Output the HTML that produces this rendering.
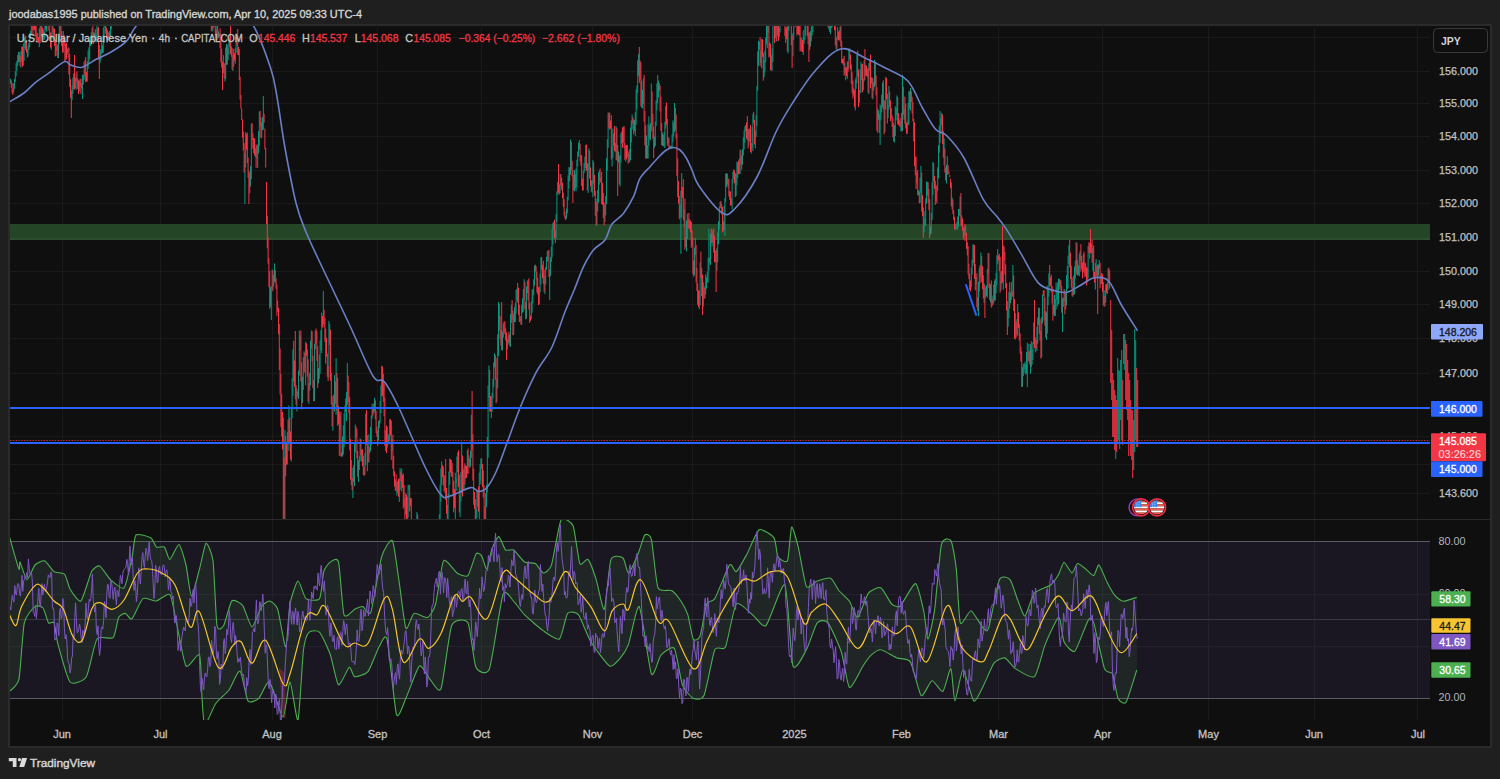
<!DOCTYPE html><html><head><meta charset="utf-8"><style>html,body{margin:0;padding:0;background:#1f1f1f;width:1500px;height:779px;overflow:hidden}svg{display:block}text{font-family:"Liberation Sans", sans-serif}</style></head><body>
<svg width="1500" height="779" viewBox="0 0 1500 779">
<defs><clipPath id="cm"><rect x="10" y="26" width="1420" height="493"/></clipPath><clipPath id="cr"><rect x="10" y="520" width="1420" height="200"/></clipPath></defs>
<rect x="8" y="24" width="1484" height="724" fill="#2a2a2a"/>
<rect x="10" y="26" width="1480" height="720" fill="#0f0f0f"/>
<line x1="62.5" y1="25" x2="62.5" y2="720" stroke="#1a1a1a" stroke-width="1"/>
<line x1="160.5" y1="25" x2="160.5" y2="720" stroke="#1a1a1a" stroke-width="1"/>
<line x1="272.5" y1="25" x2="272.5" y2="720" stroke="#1a1a1a" stroke-width="1"/>
<line x1="377.5" y1="25" x2="377.5" y2="720" stroke="#1a1a1a" stroke-width="1"/>
<line x1="481.5" y1="25" x2="481.5" y2="720" stroke="#1a1a1a" stroke-width="1"/>
<line x1="592.5" y1="25" x2="592.5" y2="720" stroke="#1a1a1a" stroke-width="1"/>
<line x1="692.5" y1="25" x2="692.5" y2="720" stroke="#1a1a1a" stroke-width="1"/>
<line x1="794.5" y1="25" x2="794.5" y2="720" stroke="#1a1a1a" stroke-width="1"/>
<line x1="901.5" y1="25" x2="901.5" y2="720" stroke="#1a1a1a" stroke-width="1"/>
<line x1="998.5" y1="25" x2="998.5" y2="720" stroke="#1a1a1a" stroke-width="1"/>
<line x1="1102.5" y1="25" x2="1102.5" y2="720" stroke="#1a1a1a" stroke-width="1"/>
<line x1="1208.5" y1="25" x2="1208.5" y2="720" stroke="#1a1a1a" stroke-width="1"/>
<line x1="1314.5" y1="25" x2="1314.5" y2="720" stroke="#1a1a1a" stroke-width="1"/>
<line x1="1417.5" y1="25" x2="1417.5" y2="720" stroke="#1a1a1a" stroke-width="1"/>
<line x1="10" y1="594.5" x2="1430" y2="594.5" stroke="#1a1a1a" stroke-width="1"/>
<line x1="10" y1="646.5" x2="1430" y2="646.5" stroke="#1a1a1a" stroke-width="1"/>
<line x1="10" y1="37.5" x2="1430" y2="37.5" stroke="#1a1a1a" stroke-width="1"/>
<line x1="10" y1="71.5" x2="1430" y2="71.5" stroke="#1a1a1a" stroke-width="1"/>
<line x1="10" y1="103.5" x2="1430" y2="103.5" stroke="#1a1a1a" stroke-width="1"/>
<line x1="10" y1="136.5" x2="1430" y2="136.5" stroke="#1a1a1a" stroke-width="1"/>
<line x1="10" y1="170.5" x2="1430" y2="170.5" stroke="#1a1a1a" stroke-width="1"/>
<line x1="10" y1="203.5" x2="1430" y2="203.5" stroke="#1a1a1a" stroke-width="1"/>
<line x1="10" y1="237.5" x2="1430" y2="237.5" stroke="#1a1a1a" stroke-width="1"/>
<line x1="10" y1="271.5" x2="1430" y2="271.5" stroke="#1a1a1a" stroke-width="1"/>
<line x1="10" y1="304.5" x2="1430" y2="304.5" stroke="#1a1a1a" stroke-width="1"/>
<line x1="10" y1="338.5" x2="1430" y2="338.5" stroke="#1a1a1a" stroke-width="1"/>
<line x1="10" y1="373.5" x2="1430" y2="373.5" stroke="#1a1a1a" stroke-width="1"/>
<line x1="10" y1="408.5" x2="1430" y2="408.5" stroke="#1a1a1a" stroke-width="1"/>
<line x1="10" y1="436.5" x2="1430" y2="436.5" stroke="#1a1a1a" stroke-width="1"/>
<line x1="10" y1="464.5" x2="1430" y2="464.5" stroke="#1a1a1a" stroke-width="1"/>
<line x1="10" y1="493.5" x2="1430" y2="493.5" stroke="#1a1a1a" stroke-width="1"/>
<rect x="10" y="224" width="1420" height="16" fill="#254626"/>
<rect x="10" y="238" width="1420" height="2" fill="#2b4f2c"/>
<line x1="10" y1="519.5" x2="1490" y2="519.5" stroke="#2a2a2a" stroke-width="1"/>
<g clip-path="url(#cm)">
<path d="M10.5 78.7V83.6M13.7 83.3V92.5M14.5 79.2V88.8M15.3 71.3V82.0M16.1 63.3V76.4M16.9 61.0V70.9M17.7 55.0V66.0M18.5 51.8V62.3M20.9 51.0V67.6M21.7 46.5V61.9M23.3 43.9V65.6M24.1 38.1V60.8M24.9 36.7V48.0M28.1 45.3V56.5M28.9 42.8V49.5M29.7 33.2V47.3M30.5 30.9V38.7M31.3 23.1V35.5M33.7 22.3V30.2M39.3 28.3V47.2M40.9 10.0V40.8M44.1 32.0V40.0M44.9 23.1V38.0M46.5 16.8V31.5M47.3 11.3V24.2M48.9 16.0V26.1M51.3 32.7V49.7M52.1 15.3V39.2M58.5 35.7V58.1M59.3 20.6V43.9M60.1 20.1V30.7M63.3 31.1V52.7M65.7 44.0V60.3M67.3 48.8V54.9M68.1 47.9V52.5M72.1 85.6V100.1M72.9 77.7V93.7M73.7 73.5V89.4M75.3 77.7V88.1M76.1 73.7V89.9M79.3 80.4V91.0M82.5 74.7V99.0M83.3 74.9V84.5M84.1 61.9V79.9M87.3 61.3V81.4M88.1 50.5V69.0M88.9 47.4V63.5M89.7 39.9V59.1M90.5 36.2V46.1M91.3 32.3V44.0M92.1 28.0V41.5M93.7 32.1V43.9M94.5 33.1V38.8M96.1 34.3V42.6M96.9 21.9V39.4M100.1 49.7V63.0M100.9 49.2V60.1M101.7 42.5V54.1M102.5 45.4V53.0M103.3 27.7V52.6M104.1 17.5V42.8M104.9 21.5V27.3M108.1 32.0V40.0M109.7 31.1V36.6M110.5 25.5V35.9M111.3 12.6V29.4M112.1 9.8V23.4M114.5 12.8V17.1M115.3 2.5V16.6M118.5 16.1V19.8M120.1 -3.4V16.4M120.9 -6.7V4.2M124.9 -1.0V10.0M125.7 -14.3V3.4M126.5 -12.1V-1.6M127.3 -11.9V-5.3M128.1 -17.1V-4.3M128.9 -18.9V-8.8M132.1 -8.4V7.8M133.7 -4.0V5.6M134.5 -18.9V-0.1M138.5 -1.2V5.9M139.3 -7.7V5.4M140.9 -23.4V0.3M141.7 -30.0V-14.5M142.5 -32.5V-22.9M143.3 -33.3V-28.4M146.5 -20.3V6.8M148.1 -15.3V-8.7M148.9 -21.2V-9.5M149.7 -22.6V-13.7M151.3 -40.0V-15.3M155.3 -24.3V2.5M156.9 -24.5V-13.6M158.5 -29.7V-11.7M159.3 -40.3V-21.2M162.5 -29.9V1.8M163.3 -31.1V-18.4M164.1 -40.5V-23.9M165.7 -40.5V-33.2M169.7 -18.8V2.6M170.5 -40.5V-12.4M172.9 -19.8V-7.3M173.7 -25.0V-14.0M175.3 -27.9V-17.8M176.1 -38.9V-20.0M176.9 -40.5V-30.1M180.9 -7.0V0.8M181.7 -12.9V0.1M182.5 -17.8V-6.3M183.3 -21.4V-7.7M184.1 -29.0V-4.3M186.5 6.6V9.1M187.3 3.7V9.6M188.1 -13.6V7.5M188.9 -17.0V-5.0M190.5 -12.9V-2.2M191.3 -25.1V-5.9M192.9 -9.5V-3.9M194.5 -4.9V11.6M195.3 -6.3V3.5M196.1 -18.7V-3.1M201.7 13.2V18.2M202.5 6.4V18.7M203.3 -3.2V17.3M205.7 10.2V20.9M206.5 3.7V20.6M207.3 1.2V9.5M208.9 4.9V12.1M212.9 22.7V31.5M213.7 18.7V27.4M216.9 22.7V38.2M218.5 31.3V37.7M223.3 55.2V73.0M224.9 63.5V81.5M225.7 47.6V79.2M226.5 44.0V64.9M228.1 47.9V60.2M228.9 39.5V54.9M229.7 36.6V47.4M232.9 55.0V71.0M235.3 47.8V63.7M236.1 37.2V52.9M244.9 153.2V204.0M245.7 132.1V167.4M250.5 166.1V186.5M251.3 123.6V179.3M255.3 148.2V157.3M256.9 145.7V158.6M257.7 144.4V168.0M258.5 131.2V153.5M259.3 111.4V145.8M261.7 122.2V138.0M262.5 117.2V130.2M263.3 96.0V129.8M270.5 286.7V307.1M271.3 286.6V320.0M272.1 269.5V289.3M273.7 275.0V286.6M274.5 263.4V281.7M284.9 429.8V520.0M287.3 432.2V464.4M288.9 405.4V450.9M291.3 408.1V461.5M292.1 378.2V418.6M292.9 349.4V395.8M296.9 388.4V411.5M297.7 391.5V396.8M298.5 370.7V399.0M299.3 330.5V375.6M300.1 335.2V350.6M302.5 376.9V402.9M303.3 357.3V389.9M304.1 351.4V371.2M305.7 341.8V385.2M308.9 383.2V403.8M309.7 372.7V390.7M310.5 340.6V385.4M311.3 330.5V348.6M314.5 343.7V401.0M315.3 330.5V349.4M318.5 368.1V383.4M319.3 354.6V378.8M320.1 340.4V373.7M320.9 330.3V350.3M321.7 312.6V353.0M323.3 291.0V324.0M328.9 320.8V377.9M329.7 323.9V344.9M332.9 402.3V430.9M333.7 394.7V409.7M334.5 375.1V411.5M336.1 358.1V414.6M340.1 415.4V430.1M342.5 436.3V456.5M343.3 425.5V454.5M344.1 413.6V447.2M344.9 405.6V443.0M345.7 398.4V412.3M346.5 391.8V421.1M347.3 363.0V404.9M352.9 467.9V498.0M354.5 443.1V486.3M355.3 424.6V452.5M358.5 460.1V482.0M359.3 456.4V470.0M360.1 438.4V461.3M364.9 453.2V475.0M365.7 413.5V465.2M368.9 434.3V462.7M369.7 447.2V453.4M370.5 427.0V451.3M371.3 415.5V445.1M372.1 403.8V418.7M373.7 403.3V413.6M374.5 397.8V411.5M378.5 421.1V440.5M379.3 419.8V428.0M380.1 400.9V423.3M380.9 385.5V413.2M381.7 365.7V396.6M385.7 430.1V451.1M387.3 426.8V447.5M388.1 435.2V443.1M388.9 434.2V444.7M389.7 419.2V440.6M392.1 438.8V451.0M396.9 481.7V495.8M399.3 478.6V502.0M400.1 468.1V490.1M401.7 468.7V491.4M405.7 492.8V514.6M407.3 496.8V529.0M408.1 485.0V517.8M408.9 484.7V489.8M414.5 534.4V547.5M415.3 525.2V545.3M416.9 511.9V537.7M420.9 529.9V545.4M424.1 550.5V573.2M424.9 546.1V580.0M425.7 540.1V555.3M426.5 535.3V546.6M428.9 554.1V562.7M429.7 528.2V567.0M430.5 525.3V546.4M431.3 526.6V533.1M432.1 527.2V531.2M432.9 522.1V538.0M433.7 521.3V529.7M436.9 534.1V544.7M438.5 542.1V550.5M439.3 514.3V542.5M440.1 484.6V522.6M440.9 468.4V501.8M441.7 461.4V485.0M448.1 493.7V522.3M448.9 471.7V498.6M449.7 458.5V484.8M455.3 472.7V530.0M456.1 478.2V483.3M456.9 456.6V491.0M457.7 452.5V472.1M460.1 495.5V517.1M460.9 472.1V501.5M461.7 441.7V493.7M463.3 469.4V490.3M464.1 466.2V489.9M465.7 465.2V478.5M467.3 450.5V473.9M468.9 455.4V465.9M469.7 458.3V468.0M470.5 450.5V466.7M471.3 414.9V458.1M476.1 508.8V524.2M476.9 489.9V517.8M477.7 491.0V506.5M479.3 472.5V530.0M480.1 464.0V480.6M480.9 458.5V484.5M485.7 493.2V521.8M486.5 484.7V507.3M487.3 436.9V492.6M488.1 385.5V457.9M488.9 365.5V398.1M491.3 396.4V418.0M492.1 392.8V411.5M492.9 378.9V398.3M493.7 362.3V387.3M494.5 353.3V367.5M496.9 378.8V401.7M497.7 334.2V388.3M498.5 302.0V355.8M499.3 303.9V330.6M502.5 331.6V350.5M503.3 323.6V337.5M507.3 339.1V349.4M508.1 335.4V344.4M510.5 314.3V346.9M511.3 304.7V323.2M513.7 313.5V334.9M514.5 307.3V322.3M515.3 302.8V322.2M516.1 289.9V313.7M516.9 288.8V300.3M520.1 316.4V321.3M521.7 304.9V325.0M522.5 298.3V312.7M523.3 288.9V311.9M524.1 279.2V299.8M526.5 286.5V318.6M527.3 280.8V293.2M531.3 301.2V319.0M532.1 289.2V312.7M532.9 290.1V303.3M533.7 279.3V295.0M534.5 265.5V285.7M539.3 287.1V304.2M540.1 273.7V292.7M540.9 257.3V284.5M544.9 275.9V294.0M545.7 267.0V284.5M546.5 256.8V269.9M547.3 251.1V261.7M548.1 250.5V260.6M549.7 269.6V300.0M550.5 257.4V276.0M551.3 246.6V262.1M552.1 229.3V257.5M552.9 223.1V244.8M553.7 221.6V230.0M556.1 214.2V238.0M556.9 191.3V222.3M557.7 181.8V194.8M560.1 174.0V193.0M566.5 208.6V218.5M567.3 196.6V213.3M568.1 175.4V200.4M568.9 166.9V188.3M570.5 139.5V174.8M573.7 174.9V190.1M574.5 170.1V191.3M576.1 168.4V191.1M576.9 159.7V187.1M577.7 151.5V166.3M578.5 142.7V156.8M579.3 140.0V150.0M583.3 170.6V190.5M584.1 162.9V173.0M584.9 156.7V171.1M585.7 144.8V167.8M588.1 162.8V193.1M588.9 148.5V170.3M592.1 181.3V192.8M592.9 160.0V197.1M596.9 198.8V225.5M597.7 189.9V211.5M598.5 172.4V202.4M599.3 170.5V184.6M604.9 204.9V222.2M605.7 195.9V215.5M606.5 158.2V204.2M607.3 139.3V170.7M608.1 112.5V148.0M612.1 146.9V166.6M612.9 128.4V158.0M616.1 126.1V160.3M618.5 151.4V162.5M620.1 154.6V186.4M620.9 133.5V162.6M621.7 131.3V143.4M623.3 126.6V142.9M625.7 145.8V161.6M628.9 154.3V162.2M629.7 149.1V162.5M630.5 127.7V160.2M631.3 120.4V142.6M632.1 114.5V129.5M634.5 120.0V131.0M635.3 112.2V136.1M636.1 89.5V124.8M636.9 85.6V109.5M637.7 60.3V92.8M638.5 54.1V75.9M641.7 80.7V107.9M642.5 89.8V108.3M643.3 78.3V104.0M646.5 135.5V158.5M648.1 124.1V158.5M648.9 116.3V145.3M650.5 123.2V140.0M651.3 83.5V131.5M654.5 136.6V147.8M655.3 121.7V145.9M656.1 100.2V126.0M656.9 83.4V110.1M657.7 75.0V103.4M658.5 80.7V97.4M662.5 133.1V145.8M664.1 132.0V146.9M664.9 121.8V148.0M665.7 105.9V128.6M668.1 137.1V143.2M670.5 145.8V148.5M671.3 145.8V148.5M672.1 134.5V148.5M672.9 120.4V141.9M673.7 122.6V136.5M674.5 103.0V132.1M680.1 204.3V217.3M680.9 190.6V254.0M681.7 173.1V217.8M684.1 209.0V227.3M686.5 220.4V251.5M687.3 213.5V238.7M689.7 219.4V229.0M694.5 247.6V275.3M695.3 237.9V254.9M699.3 290.7V309.3M700.1 262.4V305.3M703.3 282.3V306.5M704.1 286.0V298.7M705.7 274.4V294.5M706.5 277.6V288.6M707.3 271.7V282.5M708.1 257.9V282.5M708.9 229.0V270.8M710.5 233.7V265.0M712.1 232.7V246.3M715.3 250.5V262.4M716.9 248.3V270.9M717.7 232.5V262.0M718.5 221.2V244.1M719.3 206.5V229.6M720.1 201.8V208.4M724.1 205.9V229.4M724.9 198.2V236.0M725.7 173.5V202.2M726.5 173.5V186.9M732.1 179.2V209.4M732.9 171.9V183.6M733.7 169.4V179.1M736.1 174.1V195.9M736.9 161.7V185.1M737.7 162.2V178.1M739.3 158.4V173.9M740.1 149.6V174.2M742.5 149.1V164.8M743.3 137.2V155.5M744.1 130.3V149.3M744.9 126.3V142.8M745.7 125.0V131.2M748.9 128.9V145.5M749.7 128.6V141.2M751.3 143.2V153.5M752.1 127.3V147.6M752.9 114.2V151.1M755.3 130.7V148.4M756.1 115.3V137.0M756.9 86.2V125.8M757.7 51.5V90.7M758.5 40.8V65.7M759.3 41.7V49.7M760.9 50.6V63.2M761.7 38.8V68.3M764.1 60.1V77.3M764.9 50.6V72.3M765.7 37.4V62.1M766.5 10.0V44.4M767.3 23.7V48.2M768.1 17.4V32.7M769.7 42.2V56.6M771.3 55.2V70.5M772.1 48.3V71.0M772.9 13.3V62.0M776.1 26.0V41.8M777.7 24.9V35.7M779.3 27.8V36.7M780.1 11.5V32.6M780.9 6.4V20.0M781.7 -10.0V12.1M785.7 27.2V43.0M788.1 19.6V53.3M788.9 5.2V30.8M792.9 32.9V56.3M793.7 13.8V39.8M794.5 12.2V17.6M797.7 22.5V33.9M799.3 26.1V35.5M801.7 37.4V51.7M803.3 30.2V54.9M804.1 36.5V43.8M804.9 24.9V39.8M805.7 17.5V35.6M806.5 11.4V22.6M810.5 31.1V46.6M811.3 26.3V41.2M812.1 17.3V35.7M812.9 10.0V32.2M813.7 -11.0V18.4M815.3 -13.9V0.9M817.7 -0.3V11.4M818.5 -2.8V16.8M820.1 0.4V11.6M820.9 -6.5V2.8M821.7 -17.4V3.1M827.3 17.2V24.6M828.9 19.5V29.7M829.7 20.8V31.9M830.5 22.3V34.1M831.3 17.4V28.4M832.1 8.1V27.3M836.9 36.5V51.0M837.7 27.1V39.5M840.1 26.5V41.8M843.3 58.4V65.1M844.9 62.7V73.5M845.7 67.1V80.3M847.3 61.4V79.0M848.9 48.5V68.6M855.3 79.3V110.3M856.1 77.2V88.9M856.9 54.7V83.4M859.3 90.1V103.1M860.1 69.3V93.4M860.9 61.6V92.7M861.7 64.1V80.0M863.3 78.9V90.0M864.1 60.7V81.3M865.7 64.9V75.5M868.9 63.2V94.1M869.7 58.9V70.4M872.9 78.3V99.3M873.7 82.0V90.8M874.5 59.9V87.0M877.7 108.5V132.8M878.5 110.4V119.8M880.1 104.4V145.0M880.9 105.8V120.2M881.7 94.7V112.3M882.5 82.7V107.4M884.9 100.2V132.2M885.7 76.8V109.6M888.1 105.3V118.1M888.9 86.0V109.6M894.5 125.3V142.5M895.3 106.3V135.9M896.1 108.0V120.4M896.9 95.4V115.0M899.3 120.3V125.5M900.9 120.9V131.5M902.5 75.0V131.1M904.1 109.2V119.8M907.3 121.4V134.1M908.1 102.9V125.3M908.9 91.2V124.8M910.5 88.1V110.5M918.5 190.2V195.4M920.1 177.8V203.0M920.9 165.8V192.5M924.1 210.9V232.5M924.9 218.7V225.6M925.7 198.3V226.0M926.5 181.5V203.8M927.3 181.9V195.5M930.5 226.3V234.8M931.3 212.9V233.3M932.1 182.2V220.1M932.9 161.8V195.0M937.7 167.3V190.9M938.5 145.2V178.4M939.3 125.5V152.7M940.1 111.0V142.8M940.9 117.9V134.1M941.7 112.9V125.1M944.1 138.3V165.2M946.5 164.9V183.4M947.3 156.3V175.0M952.1 197.5V209.3M955.3 223.5V229.5M956.1 227.9V229.5M956.9 222.0V229.5M957.7 216.5V229.5M958.5 208.9V226.9M959.3 208.9V215.6M960.1 196.4V216.2M964.1 226.3V236.4M965.7 226.1V235.4M971.3 267.5V287.4M972.1 259.9V274.5M972.9 244.5V266.4M976.1 276.8V284.1M978.5 282.0V316.2M979.3 267.5V291.4M980.9 252.5V276.5M984.1 283.3V302.9M985.7 287.3V297.5M986.5 285.4V295.8M987.3 269.0V297.7M988.1 253.1V273.6M990.5 284.3V302.3M992.9 295.7V304.8M993.7 284.6V303.5M994.5 280.7V300.3M996.1 272.7V293.4M996.9 255.3V285.2M997.7 249.1V264.2M1000.9 272.5V290.5M1001.7 270.7V283.8M1003.3 245.3V289.7M1008.1 308.0V326.8M1008.9 291.8V318.3M1010.5 292.8V303.3M1011.3 281.9V300.0M1012.9 265.0V296.6M1015.3 312.9V339.5M1016.9 319.2V334.1M1017.7 304.1V336.0M1022.5 367.3V386.7M1023.3 363.7V376.1M1024.1 363.9V373.1M1024.9 361.8V369.2M1025.7 363.8V374.8M1026.5 352.1V373.2M1027.3 342.7V387.0M1028.9 343.8V360.8M1030.5 344.3V373.7M1032.1 349.8V364.7M1032.9 342.1V360.0M1033.7 322.5V344.5M1035.3 337.3V352.5M1036.9 326.7V351.0M1037.7 317.4V343.8M1038.5 307.8V325.0M1041.7 316.9V357.4M1042.5 294.5V323.4M1046.5 312.3V339.9M1047.3 285.6V333.7M1048.1 288.3V305.3M1048.9 273.3V296.6M1054.5 295.0V316.1M1055.3 299.0V316.0M1056.1 282.4V309.4M1056.9 287.4V299.5M1057.7 282.4V306.3M1058.5 278.6V303.9M1059.3 278.8V289.3M1062.5 298.2V332.0M1063.3 297.5V306.9M1064.1 288.9V301.4M1066.5 275.3V305.4M1067.3 266.3V289.1M1068.1 255.6V288.4M1068.9 245.2V263.7M1072.9 287.3V296.9M1073.7 275.5V295.0M1074.5 266.5V294.2M1075.3 260.6V278.5M1076.1 242.3V272.9M1077.7 259.9V275.4M1078.5 265.4V275.3M1079.3 253.8V276.2M1080.1 251.1V260.2M1083.3 254.0V271.9M1087.3 268.1V282.5M1088.1 246.1V278.4M1089.7 243.0V258.7M1092.9 248.1V270.8M1095.3 263.1V289.6M1096.1 259.1V276.4M1098.5 264.5V275.6M1099.3 260.1V268.9M1100.9 275.7V284.0M1104.9 290.0V306.5M1105.7 284.3V302.7M1107.3 282.1V294.0M1108.1 268.4V290.0M1115.7 395.0V459.0M1117.7 358.0V442.0M1118.7 370.0V440.0M1119.7 371.0V449.0M1120.7 360.0V420.0M1121.7 350.0V440.0M1124.7 334.0V370.0M1131.7 410.0V460.0M1133.7 420.0V470.0M1134.7 329.0V452.0M1135.7 340.0V440.0" stroke="#089981" stroke-width="1" fill="none"/>
<path d="M11.3 80.4V87.9M12.1 82.9V93.3M12.9 88.5V95.0M19.3 52.3V61.9M20.1 56.1V66.0M22.5 46.9V66.8M25.7 35.7V50.2M26.5 40.3V52.7M27.3 48.9V57.6M32.1 22.8V30.5M32.9 24.6V35.5M34.5 21.3V30.1M35.3 24.9V36.5M36.1 24.5V39.4M36.9 33.4V40.5M37.7 32.8V42.4M38.5 37.0V42.9M40.1 26.3V43.1M41.7 22.4V36.3M42.5 27.6V33.4M43.3 29.4V37.6M45.7 19.5V29.5M48.1 10.0V30.8M49.7 17.4V38.5M50.5 32.5V47.7M52.9 15.5V32.6M53.7 28.3V37.5M54.5 28.6V45.8M55.3 39.5V56.4M56.1 42.6V55.9M56.9 46.1V50.8M57.7 44.4V57.9M60.9 17.2V36.8M61.7 31.0V46.0M62.5 37.3V52.3M64.1 34.9V46.2M64.9 39.3V62.0M66.5 43.0V59.2M68.9 47.6V74.6M69.7 53.9V86.8M70.5 79.2V97.8M71.3 90.5V118.0M74.5 55.0V89.4M76.9 71.2V81.6M77.7 78.2V89.0M78.5 80.7V94.2M80.1 78.8V86.6M80.9 78.8V94.0M81.7 83.2V88.6M84.9 60.2V76.1M85.7 57.1V82.2M86.5 72.1V81.8M92.9 26.0V43.0M95.3 29.1V40.6M97.7 28.1V35.5M98.5 26.8V59.5M99.3 45.1V79.0M105.7 17.8V33.8M106.5 27.6V38.3M107.3 29.9V39.9M108.9 33.1V38.1M112.9 8.5V13.0M113.7 10.1V17.3M116.1 3.4V15.9M116.9 10.8V13.7M117.7 11.3V21.5M119.3 15.7V18.1M121.7 -7.1V0.2M122.5 -7.8V2.0M123.3 -7.8V10.5M124.1 1.6V10.6M129.7 -14.0V-2.5M130.5 -8.1V0.8M131.3 -5.8V11.9M132.9 -2.7V6.0M135.3 -17.7V-7.5M136.1 -13.5V-2.6M136.9 -6.4V1.7M137.7 -6.0V8.5M140.1 -6.7V-1.7M144.1 -34.1V-28.6M144.9 -34.1V-11.6M145.7 -19.9V7.1M147.3 -15.5V1.4M150.5 -26.5V-14.2M152.1 -28.3V-9.1M152.9 -14.6V-5.1M153.7 -14.4V-5.2M154.5 -8.6V5.5M156.1 -22.9V-13.2M157.7 -26.9V-9.8M160.1 -39.2V-27.1M160.9 -33.6V-10.7M161.7 -15.5V-0.3M164.9 -40.5V-29.9M166.5 -40.5V-26.8M167.3 -32.2V-14.2M168.1 -25.4V-7.4M168.9 -13.9V2.4M171.3 -40.5V-18.0M172.1 -27.3V-0.6M174.5 -24.9V-14.6M177.7 -38.5V-15.7M178.5 -27.3V-5.6M179.3 -40.0V-3.8M180.1 -9.9V5.5M184.9 -26.7V-2.0M185.7 -7.2V8.6M189.7 -12.0V2.1M192.1 -23.6V-2.8M193.7 -7.8V6.4M196.9 -16.3V-10.6M197.7 -16.3V-1.5M198.5 -6.7V2.7M199.3 -1.2V3.2M200.1 -1.8V8.2M200.9 1.2V17.7M204.1 -3.7V16.0M204.9 8.2V20.1M208.1 3.1V15.5M209.7 6.3V15.2M210.5 10.4V23.9M211.3 20.1V31.3M212.1 24.8V29.3M214.5 19.4V26.4M215.3 18.8V36.4M216.1 29.4V40.4M217.7 23.9V39.5M219.3 33.1V36.7M220.1 28.3V48.3M220.9 33.9V62.5M221.7 48.6V67.6M222.5 61.8V90.0M224.1 63.2V78.2M227.3 44.6V64.7M230.5 25.0V54.0M231.3 46.2V56.7M232.1 48.0V69.5M233.7 48.9V66.5M234.5 53.0V60.6M236.9 37.8V45.2M237.7 29.0V54.9M238.5 47.1V55.1M239.3 49.1V80.0M240.1 76.6V99.6M240.9 95.0V108.7M241.7 108.5V120.0M242.5 119.3V137.8M243.3 131.7V150.7M244.1 143.2V172.7M246.5 134.3V149.7M247.3 132.6V163.0M248.1 157.6V177.9M248.9 170.8V204.0M249.7 172.7V193.4M252.1 123.2V140.5M252.9 133.3V148.8M253.7 138.0V153.1M254.5 138.1V155.3M256.1 144.5V167.8M260.1 110.9V127.3M260.9 117.4V138.1M264.1 113.8V122.6M264.9 128.5V149.3M265.7 148.0V167.6M266.5 182.0V224.4M267.3 216.0V248.3M268.1 237.8V263.9M268.9 258.0V287.2M269.7 271.0V308.9M272.9 270.2V291.1M275.3 270.1V283.5M276.1 278.1V288.9M276.9 284.5V315.9M277.7 300.7V312.0M278.5 307.9V334.3M279.3 323.8V370.0M280.1 348.4V394.5M280.9 373.9V426.9M281.7 394.0V436.3M282.5 412.0V449.5M283.3 417.4V520.0M284.1 457.5V518.5M285.7 436.1V476.3M286.5 444.0V464.8M288.1 419.6V443.3M289.7 417.6V442.6M290.5 431.4V459.5M293.7 340.8V381.6M294.5 360.6V386.7M295.3 331.0V399.4M296.1 385.1V404.8M300.9 330.5V381.5M301.7 362.3V409.5M304.9 352.8V372.9M306.5 343.2V355.8M307.3 349.3V376.7M308.1 359.3V401.5M312.1 331.2V361.4M312.9 355.6V388.1M313.7 380.0V401.4M316.1 328.5V344.2M316.9 331.1V360.9M317.7 346.2V387.9M322.5 315.9V327.4M324.1 309.8V327.5M324.9 317.9V341.7M325.7 328.6V363.6M326.5 337.8V356.7M327.3 353.7V376.8M328.1 366.2V380.9M330.5 329.5V380.6M331.3 372.9V404.3M332.1 396.1V426.5M335.3 381.3V403.7M336.9 373.0V410.1M337.7 378.0V425.9M338.5 405.9V424.2M339.3 411.8V456.0M340.9 411.7V456.5M341.7 452.3V456.5M348.1 375.5V402.2M348.9 382.0V413.3M349.7 397.2V450.4M350.5 439.1V479.4M351.3 459.9V485.3M352.1 478.0V490.1M353.7 465.3V482.0M356.1 426.9V437.5M356.9 429.2V458.3M357.7 450.9V476.8M360.9 439.1V455.4M361.7 449.8V461.7M362.5 449.2V466.2M363.3 455.7V474.8M364.1 466.5V476.0M366.5 410.0V444.9M367.3 435.0V471.3M368.1 446.1V461.9M372.9 408.4V415.8M375.3 400.3V419.5M376.1 410.7V433.0M376.9 426.6V436.7M377.7 430.6V445.8M382.5 366.5V395.8M383.3 373.7V401.8M384.1 383.7V416.2M384.9 397.7V446.0M386.5 425.4V453.1M390.5 419.2V435.3M391.3 420.7V460.1M392.9 434.7V468.8M393.7 455.9V476.2M394.5 471.3V486.5M395.3 479.4V491.0M396.1 474.1V490.3M397.7 481.2V493.2M398.5 478.8V496.8M400.9 471.6V481.0M402.5 474.9V487.9M403.3 473.6V508.6M404.1 485.0V506.7M404.9 498.6V520.0M406.5 494.6V524.2M409.7 485.2V511.5M410.5 498.3V505.9M411.3 498.0V526.6M412.1 521.9V543.3M412.9 522.1V560.0M413.7 535.9V553.9M416.1 525.5V538.2M417.7 514.4V525.0M418.5 519.8V532.9M419.3 523.0V533.2M420.1 526.6V552.1M421.7 535.1V545.6M422.5 540.5V555.3M423.3 546.0V571.4M427.3 536.1V557.9M428.1 536.4V565.9M434.5 520.5V525.1M435.3 519.7V531.1M436.1 520.6V580.0M437.7 533.9V558.5M442.5 465.2V477.1M443.3 466.7V485.4M444.1 476.2V491.1M444.9 475.2V492.6M445.7 459.0V500.1M446.5 488.1V513.7M447.3 504.7V520.5M450.5 459.3V472.6M451.3 459.8V476.7M452.1 463.0V476.9M452.9 471.7V493.5M453.7 480.8V512.3M454.5 489.3V508.1M458.5 450.4V487.1M459.3 474.7V512.5M462.5 455.5V496.6M464.9 463.2V484.5M466.5 466.0V478.0M468.1 448.5V473.7M472.1 391.0V449.8M472.9 434.1V480.5M473.7 468.7V504.8M474.5 492.0V508.8M475.3 499.0V523.1M478.5 486.4V511.6M481.7 458.5V468.6M482.5 464.1V486.8M483.3 470.5V497.5M484.1 485.4V523.5M484.9 506.7V521.6M489.7 369.8V411.5M490.5 396.1V411.8M495.3 355.1V379.8M496.1 358.0V403.3M500.1 315.8V339.1M500.9 330.3V345.7M501.7 302.0V350.2M504.1 321.4V332.3M504.9 321.4V334.2M505.7 328.5V340.4M506.5 332.4V360.0M508.9 331.6V342.3M509.7 334.2V345.8M512.1 300.2V319.5M512.9 310.3V335.3M517.7 283.0V302.6M518.5 287.7V315.0M519.3 304.5V322.0M520.9 316.1V324.6M524.9 281.8V309.4M525.7 302.3V319.4M528.1 280.0V299.9M528.9 278.3V309.5M529.7 303.0V323.0M530.5 315.8V321.0M535.3 264.7V271.5M536.1 266.1V279.6M536.9 271.8V292.4M537.7 278.0V294.5M538.5 287.2V305.1M541.7 257.0V270.0M542.5 264.9V278.2M543.3 260.8V283.8M544.1 269.5V291.9M548.9 249.9V277.0M554.5 219.7V237.9M555.3 230.8V243.1M558.5 164.0V192.9M559.3 184.3V194.7M560.9 174.3V185.3M561.7 177.7V189.9M562.5 182.8V198.2M563.3 192.6V206.8M564.1 199.3V215.7M564.9 211.5V218.5M565.7 215.8V220.1M569.7 167.6V181.3M571.3 141.7V170.4M572.1 160.9V176.2M572.9 170.1V202.9M575.3 174.2V188.2M580.1 143.7V161.3M580.9 154.9V165.8M581.7 155.1V186.0M582.5 178.9V190.5M586.5 144.6V170.6M587.3 163.3V190.5M589.7 150.8V178.6M590.5 167.5V186.3M591.3 180.1V191.6M593.7 162.3V183.5M594.5 174.9V195.9M595.3 190.8V215.9M596.1 201.6V225.5M600.1 168.5V181.4M600.9 177.6V183.0M601.7 171.8V204.1M602.5 183.0V205.0M603.3 193.0V218.0M604.1 202.4V225.4M608.9 112.8V128.0M609.7 112.5V129.7M610.5 120.6V128.7M611.3 115.1V159.6M613.7 133.4V146.2M614.5 126.0V151.0M615.3 143.0V152.0M616.9 128.0V160.3M617.7 145.0V196.0M619.3 155.8V184.3M622.5 127.4V147.8M624.1 126.2V148.1M624.9 142.9V159.8M626.5 145.0V159.2M627.3 144.8V157.0M628.1 151.4V163.6M632.9 117.3V123.6M633.7 119.5V134.2M639.3 47.0V82.8M640.1 60.6V80.2M640.9 62.4V106.3M644.1 74.9V121.8M644.9 111.0V145.4M645.7 125.4V158.5M647.3 144.9V158.5M649.7 125.6V138.4M652.1 91.4V125.5M652.9 113.7V138.7M653.7 126.5V158.0M659.3 83.2V90.5M660.1 85.7V111.3M660.9 96.7V130.9M661.7 122.9V145.1M663.3 134.9V146.0M666.5 102.5V124.7M667.3 118.9V145.7M668.9 137.8V148.5M669.7 145.3V148.5M675.3 107.9V130.4M676.1 114.4V138.6M676.9 133.4V176.1M677.7 158.4V197.0M678.5 181.1V203.5M679.3 195.8V219.4M682.5 187.1V197.8M683.3 179.1V220.3M684.9 198.6V249.7M685.7 237.1V247.3M688.1 218.5V228.7M688.9 213.0V228.0M690.5 220.7V232.2M691.3 222.0V247.9M692.1 230.5V246.0M692.9 237.3V273.9M693.7 260.5V276.7M696.1 244.9V282.4M696.9 268.0V291.1M697.7 283.2V304.9M698.5 290.4V307.1M700.9 251.6V278.3M701.7 267.6V296.2M702.5 274.6V315.0M704.9 288.0V298.5M709.7 257.4V262.8M711.3 228.5V242.9M712.9 229.7V242.8M713.7 228.5V252.5M714.5 235.7V262.3M716.1 250.3V292.0M720.9 200.9V208.0M721.7 204.2V214.3M722.5 207.0V232.3M723.3 221.3V231.3M727.3 173.5V184.5M728.1 179.6V187.9M728.9 178.4V196.4M729.7 190.9V199.9M730.5 191.5V205.6M731.3 198.7V205.6M734.5 170.3V183.3M735.3 173.2V197.0M738.5 160.7V174.3M740.9 150.3V164.4M741.7 155.4V169.7M746.5 122.3V138.4M747.3 116.1V140.4M748.1 128.9V148.5M750.5 124.9V152.1M753.7 111.8V123.2M754.5 120.0V144.4M760.1 37.0V66.3M762.5 39.4V56.9M763.3 52.6V80.6M768.9 19.1V57.4M770.5 43.7V70.3M773.7 17.4V23.9M774.5 19.7V43.0M775.3 25.1V38.0M776.9 22.9V41.0M778.5 19.0V40.8M782.5 -0.2V7.6M783.3 3.4V17.3M784.1 14.5V25.2M784.9 13.7V36.1M786.5 27.5V39.1M787.3 24.8V51.4M789.7 6.7V19.2M790.5 8.2V24.7M791.3 14.0V45.2M792.1 35.7V68.0M795.3 7.5V26.9M796.1 13.5V22.9M796.9 18.1V35.7M798.5 18.3V34.6M800.1 0.0V51.3M800.9 38.3V50.5M802.5 40.0V52.1M807.3 11.1V36.4M808.1 23.6V44.4M808.9 32.1V62.0M809.7 32.7V50.2M814.5 -5.3V1.5M816.1 -20.0V1.8M816.9 -7.4V9.5M819.3 3.0V10.8M822.5 -15.8V-4.7M823.3 -13.1V-0.5M824.1 -10.9V-0.2M824.9 -11.5V2.8M825.7 -5.1V12.7M826.5 3.3V23.2M828.1 14.5V27.6M832.9 10.0V13.7M833.7 11.0V23.2M834.5 12.0V30.3M835.3 23.3V45.3M836.1 38.5V48.9M838.5 31.8V40.4M839.3 30.3V39.9M840.9 26.2V46.8M841.7 40.7V63.1M842.5 59.0V63.5M844.1 55.9V75.6M846.5 67.3V76.1M848.1 61.0V71.6M849.7 48.5V59.5M850.5 54.7V69.6M851.3 64.5V84.1M852.1 72.2V93.0M852.9 80.6V98.4M853.7 88.4V95.4M854.5 90.2V107.2M857.7 50.6V76.6M858.5 69.6V107.2M862.5 63.8V92.2M864.9 49.0V79.8M866.5 65.6V76.0M867.3 69.0V77.0M868.1 67.7V92.7M870.5 54.6V88.3M871.3 77.1V83.4M872.1 77.4V98.1M875.3 62.8V85.4M876.1 75.3V95.4M876.9 87.4V130.8M879.3 114.1V132.7M883.3 80.3V109.4M884.1 100.6V134.4M886.5 77.9V99.2M887.3 93.7V123.5M889.7 91.7V106.7M890.5 100.4V121.2M891.3 108.2V118.7M892.1 115.4V127.0M892.9 117.9V137.3M893.7 123.2V141.4M897.7 97.1V124.1M898.5 113.1V125.3M900.1 117.8V127.3M901.7 112.9V130.6M903.3 86.6V114.6M904.9 96.6V123.8M905.7 103.8V128.4M906.5 122.8V133.6M909.7 90.9V108.5M911.3 91.5V101.9M912.1 96.8V113.5M912.9 102.2V121.2M913.7 118.8V141.3M914.5 122.2V166.1M915.3 156.7V175.2M916.1 156.6V189.0M916.9 172.7V183.5M917.7 169.9V195.2M919.3 191.5V203.4M921.7 172.6V211.6M922.5 195.1V216.2M923.3 207.4V238.0M928.1 182.3V203.0M928.9 189.0V210.0M929.7 199.2V238.0M933.7 163.1V181.7M934.5 175.9V188.7M935.3 180.9V205.0M936.1 185.1V200.8M936.9 187.1V203.5M942.5 114.5V144.1M943.3 131.1V157.6M944.9 148.3V172.5M945.7 167.3V180.5M948.1 165.1V173.8M948.9 171.3V174.3M949.7 175.0V177.2M950.5 178.7V188.2M951.3 182.4V206.3M952.9 199.3V213.9M953.7 210.3V219.9M954.5 216.8V229.5M960.9 193.0V225.5M961.7 215.4V226.4M962.5 218.4V231.0M963.3 228.1V239.3M964.9 223.8V240.8M966.5 232.8V248.9M967.3 242.2V255.5M968.1 246.1V274.5M968.9 263.7V279.1M969.7 273.7V289.9M970.5 280.7V291.6M973.7 244.5V263.0M974.5 245.0V278.8M975.3 264.1V290.3M976.9 273.2V307.3M977.7 297.5V311.0M980.1 264.9V283.3M981.7 256.2V282.3M982.5 266.1V289.2M983.3 275.3V298.4M984.9 285.0V318.0M988.9 253.2V288.2M989.7 283.3V300.1M991.3 280.5V307.7M992.1 299.2V306.2M995.3 279.0V300.8M998.5 255.4V260.4M999.3 253.7V271.1M1000.1 257.0V292.8M1002.5 226.0V282.6M1004.1 246.5V260.2M1004.9 252.0V274.5M1005.7 264.4V288.1M1006.5 283.1V310.5M1007.3 300.9V335.0M1009.7 282.4V308.2M1012.1 291.1V296.7M1013.7 275.3V310.9M1014.5 299.1V338.8M1016.1 322.1V337.8M1018.5 312.4V327.9M1019.3 323.9V340.5M1020.1 333.3V353.7M1020.9 346.4V361.6M1021.7 351.4V387.0M1028.1 351.6V361.5M1029.7 350.9V364.4M1031.3 341.3V367.3M1034.5 300.0V348.0M1036.1 339.7V348.9M1039.3 307.8V333.7M1040.1 319.1V340.7M1040.9 331.0V358.5M1043.3 290.5V296.0M1044.1 290.0V320.7M1044.9 297.8V325.7M1045.7 310.9V337.5M1049.7 265.0V286.7M1050.5 277.3V285.7M1051.3 274.8V292.1M1052.1 286.0V303.8M1052.9 289.0V320.6M1053.7 305.2V314.4M1060.1 280.1V286.2M1060.9 280.4V290.6M1061.7 285.8V312.5M1064.9 290.2V314.4M1065.7 293.6V309.5M1069.7 240.0V267.5M1070.5 252.6V279.0M1071.3 265.7V287.6M1072.1 277.5V296.2M1076.9 242.7V275.0M1080.9 244.2V271.5M1081.7 256.0V268.7M1082.5 262.4V278.3M1084.1 251.7V273.0M1084.9 262.4V277.1M1085.7 263.2V276.1M1086.5 267.1V285.5M1088.9 242.3V253.2M1090.5 229.0V253.1M1091.3 243.7V253.3M1092.1 239.6V262.9M1093.7 245.3V278.2M1094.5 271.9V282.7M1096.9 266.0V276.6M1097.7 264.4V314.0M1100.1 263.0V288.4M1101.7 273.0V284.2M1102.5 273.9V291.8M1103.3 282.0V305.2M1104.1 296.1V306.5M1106.5 284.1V292.8M1108.9 267.8V283.3M1109.7 270.4V288.5M1110.7 300.0V383.0M1111.7 330.0V400.0M1112.7 373.0V437.0M1113.7 380.0V437.0M1114.7 390.0V450.0M1116.7 400.0V452.0M1122.7 380.0V445.0M1123.7 334.0V364.0M1125.7 340.0V400.0M1126.7 344.0V410.0M1127.7 360.0V420.0M1128.7 373.0V456.0M1129.7 380.0V440.0M1130.7 400.0V456.0M1132.7 410.0V478.0M1136.7 368.0V447.0M1137.7 380.0V447.0" stroke="#f23645" stroke-width="1" fill="none"/>
<path d="M9.6,101.8C12.0,100.3 19.7,96.2 24.0,93.0C28.3,89.8 31.3,85.8 35.3,82.6C39.3,79.4 43.2,77.2 48.0,73.7C52.8,70.2 60.4,63.2 64.2,61.7C68.0,60.2 67.7,64.1 70.6,65.0C73.5,65.9 77.5,68.2 81.8,67.3C86.1,66.3 91.2,62.0 96.3,59.3C101.4,56.6 107.2,54.4 112.3,51.3C117.4,48.2 122.6,45.3 126.7,40.9C130.8,36.5 131.6,30.8 137.2,24.8C142.8,18.8 149.5,11.6 160.0,5.0C170.5,-1.6 188.3,-14.2 200.0,-15.0C211.7,-15.8 221.2,-6.7 230.0,0.0C238.8,6.7 246.2,13.7 253.0,25.0C259.8,36.3 266.6,56.0 270.6,68.0C274.6,80.0 274.6,83.7 277.0,97.0C279.4,110.3 281.8,130.3 285.0,148.0C288.2,165.7 292.5,189.0 296.0,203.0C299.5,217.0 301.4,220.8 306.0,232.0C310.6,243.2 316.0,254.0 323.5,270.0C331.0,286.0 342.8,310.3 351.0,328.0C359.2,345.7 367.4,367.0 373.0,376.0C378.6,385.0 380.2,376.7 384.5,382.0C388.8,387.3 392.3,394.0 399.0,408.0C405.7,422.0 417.7,451.6 424.6,466.0C431.6,480.4 436.5,489.6 440.7,494.6C444.9,499.6 445.0,497.2 450.0,496.0C455.0,494.8 465.8,488.4 470.5,487.6C475.2,486.8 475.8,491.3 478.5,491.4C481.2,491.5 483.6,491.2 486.5,488.0C489.4,484.8 492.6,479.5 496.0,472.0C499.4,464.5 503.0,453.7 507.0,443.0C511.0,432.3 515.2,419.7 520.0,408.0C524.8,396.3 530.7,382.9 536.0,372.7C541.3,362.5 547.2,357.2 552.0,347.0C556.8,336.8 561.3,321.2 565.0,311.7C568.7,302.2 571.1,297.5 574.2,290.0C577.3,282.5 580.2,273.5 583.4,266.8C586.6,260.1 589.8,254.5 593.4,250.0C597.0,245.5 601.9,244.3 605.0,240.0C608.1,235.7 608.7,228.7 611.8,224.3C614.9,219.9 619.8,218.0 623.4,213.4C627.0,208.8 630.7,202.5 633.5,196.7C636.3,190.9 637.2,183.4 640.0,178.4C642.8,173.4 647.3,169.8 650.0,166.7C652.7,163.6 653.5,162.6 656.0,160.0C658.5,157.4 662.2,153.1 665.0,151.0C667.8,148.9 670.5,147.7 673.0,147.5C675.5,147.3 677.8,148.3 680.0,150.0C682.2,151.7 684.0,154.2 686.0,157.5C688.0,160.8 689.8,165.2 692.0,170.0C694.2,174.8 694.0,178.9 699.0,186.0C704.0,193.1 715.8,208.8 721.7,212.6C727.6,216.4 728.7,214.9 734.6,209.0C740.5,203.1 750.1,189.8 757.0,177.0C763.9,164.2 770.1,144.3 776.0,132.0C781.9,119.7 785.8,113.5 792.3,103.4C798.8,93.3 806.8,80.4 814.8,71.3C822.8,62.2 832.0,51.1 840.5,49.0C849.0,46.9 858.5,55.3 866.0,58.5C873.5,61.7 878.4,64.2 885.4,68.0C892.4,71.8 901.7,74.3 907.9,81.0C914.1,87.7 917.9,100.0 922.5,108.0C927.1,116.0 931.3,124.4 935.3,129.0C939.3,133.6 941.7,130.7 946.5,135.5C951.3,140.3 957.9,147.3 964.0,158.0C970.1,168.7 978.0,190.1 983.4,199.7C988.8,209.3 992.5,211.0 996.3,215.8C1000.1,220.6 1001.7,222.0 1006.0,228.6C1010.3,235.2 1016.7,246.3 1022.0,255.3C1027.3,264.3 1032.7,276.7 1038.0,282.6C1043.3,288.5 1049.2,289.0 1054.0,290.6C1058.8,292.2 1062.7,293.0 1067.0,292.2C1071.3,291.4 1075.2,288.2 1079.7,285.8C1084.2,283.4 1089.4,278.6 1094.2,277.8C1099.0,277.0 1104.1,276.5 1108.6,281.0C1113.1,285.5 1116.6,296.7 1121.4,305.0C1126.2,313.3 1134.8,326.4 1137.5,330.7" fill="none" stroke="#6b7fc6" stroke-width="1.6"/>
<line x1="965.8" y1="284.2" x2="976.4" y2="315.6" stroke="#2962ff" stroke-width="2"/>
</g>
<rect x="10" y="407" width="1420" height="2" fill="#2962ff"/>
<line x1="10" y1="440.5" x2="1430" y2="440.5" stroke="#f23645" stroke-width="1" stroke-dasharray="1.4 1.4" opacity="0.8"/>
<rect x="10" y="442" width="1420" height="2" fill="#2962ff"/>
<rect x="10" y="542" width="1420" height="156" fill="rgba(126,87,194,0.11)"/>
<line x1="10" y1="541.5" x2="1430" y2="541.5" stroke="#5d5b66" stroke-width="1"/>
<line x1="10" y1="619.5" x2="1430" y2="619.5" stroke="#3a3842" stroke-width="1"/>
<line x1="10" y1="698.5" x2="1430" y2="698.5" stroke="#5d5b66" stroke-width="1"/>
<g clip-path="url(#cr)">
<path d="M9.4,536.6C10.3,539.8 17.8,566.5 18.9,569.0C20.0,571.5 19.2,560.9 20.0,562.0C20.8,563.1 25.5,579.4 27.0,579.7C28.5,580.0 33.2,566.9 35.0,565.0C36.8,563.1 42.6,560.1 44.5,560.8C46.4,561.5 52.0,570.2 54.0,571.6C56.0,573.0 63.1,572.6 64.7,574.3C66.3,576.0 68.4,586.3 70.0,589.0C71.6,591.7 78.7,602.7 80.9,601.0C83.1,599.3 89.7,575.1 91.6,571.6C93.5,568.1 97.8,565.2 99.7,566.0C101.6,566.8 108.1,577.5 110.5,579.7C112.9,581.9 121.8,590.0 124.0,587.8C126.2,585.6 130.8,563.3 132.0,558.0C133.2,552.7 134.1,537.0 136.0,535.0C137.9,533.0 149.0,536.8 151.0,538.0C153.0,539.2 155.0,546.1 156.3,547.0C157.6,547.9 163.1,545.8 164.4,547.0C165.8,548.2 168.3,559.7 169.8,559.5C171.3,559.3 177.4,544.1 179.0,544.6C180.6,545.1 184.8,559.9 186.0,565.0C187.2,570.1 190.1,595.6 191.4,596.0C192.8,596.4 198.0,574.3 199.5,569.0C201.0,563.7 204.7,544.1 206.0,543.3C207.3,542.5 211.9,552.6 213.0,560.8C214.1,569.0 215.9,619.0 217.0,625.5C218.1,632.0 222.2,628.0 223.7,625.5C225.2,623.0 229.9,603.0 231.8,601.0C233.7,599.0 240.6,602.7 242.6,605.3C244.6,607.9 250.1,626.9 252.0,627.0C253.9,627.1 259.8,609.2 261.5,606.6C263.2,604.0 267.9,600.8 269.5,601.0C271.1,601.2 276.0,604.4 277.6,609.0C279.2,613.6 284.5,647.5 285.7,647.0C286.9,646.5 288.8,610.6 290.0,604.0C291.2,597.4 296.4,581.5 298.0,581.0C299.6,580.5 303.8,596.8 306.0,598.6C308.2,600.4 317.8,601.3 319.6,598.6C321.4,595.9 322.6,575.3 323.7,571.6C324.8,567.9 328.9,563.0 330.4,562.0C331.9,561.0 337.1,556.7 338.5,562.0C339.9,567.3 342.4,610.0 344.0,614.7C345.6,619.4 352.8,610.1 354.7,609.3C356.6,608.5 361.2,606.3 362.8,606.6C364.4,606.9 369.0,617.0 370.9,612.0C372.8,607.0 379.5,563.9 381.6,556.8C383.8,549.7 390.6,538.0 392.4,540.6C394.2,543.2 397.8,573.6 399.2,582.4C400.6,591.2 404.4,625.1 405.9,628.2C407.4,631.3 411.8,614.5 414.0,613.4C416.2,612.3 425.3,618.3 427.5,617.4C429.7,616.5 434.0,609.7 435.6,604.0C437.2,598.3 441.5,563.9 443.6,560.8C445.7,557.7 454.6,571.5 457.0,573.0C459.4,574.5 466.0,577.5 467.9,575.6C469.8,573.7 474.6,556.0 476.0,554.0C477.4,552.0 480.3,553.9 481.4,555.4C482.5,556.9 485.7,569.7 486.8,569.0C487.9,568.3 490.8,551.9 492.0,548.7C493.2,545.5 497.5,536.5 498.9,536.6C500.3,536.7 504.1,548.7 505.6,550.0C507.1,551.3 511.8,548.8 513.7,550.0C515.6,551.2 522.3,560.6 524.5,562.0C526.7,563.4 533.4,562.4 535.3,563.5C537.2,564.6 541.8,572.9 543.4,573.0C545.0,573.1 549.8,570.2 551.5,564.9C553.2,559.6 558.8,524.3 560.9,520.4C563.0,516.5 571.1,521.5 573.0,525.8C574.9,530.1 578.3,560.1 579.8,563.5C581.3,566.9 586.4,557.9 588.0,559.5C589.6,561.1 594.6,574.7 596.2,579.7C597.8,584.7 602.8,611.3 604.3,609.3C605.8,607.3 609.1,564.6 611.0,559.5C612.9,554.4 621.2,556.6 623.0,558.0C624.8,559.4 627.0,573.4 628.5,573.0C630.0,572.6 636.4,557.8 638.0,554.0C639.6,550.2 643.4,536.7 644.7,535.2C646.0,533.7 650.1,534.0 651.4,539.3C652.7,544.6 656.0,582.7 658.0,587.8C660.0,592.9 669.3,589.1 671.6,590.5C673.9,591.9 679.4,598.9 681.0,601.3C682.6,603.7 686.6,610.9 687.8,614.7C689.0,618.5 692.0,636.8 693.2,639.0C694.4,641.2 698.6,639.8 700.0,636.3C701.4,632.8 705.2,607.8 706.7,604.0C708.2,600.2 712.5,602.5 714.8,598.6C717.1,594.7 727.5,567.6 729.6,564.9C731.8,562.2 734.6,572.7 736.3,571.6C738.0,570.5 744.7,558.2 747.0,554.0C749.3,549.8 756.5,531.4 759.2,529.8C761.9,528.2 772.1,535.2 774.0,537.9C775.9,540.6 776.6,554.5 778.0,556.8C779.4,559.1 786.1,563.8 787.5,560.8C788.9,557.8 790.5,528.5 791.6,527.1C792.7,525.8 796.8,541.4 798.3,547.3C799.8,553.2 804.5,583.0 806.4,586.4C808.3,589.8 814.8,581.8 817.2,581.0C819.6,580.2 828.5,577.3 830.7,578.3C832.9,579.2 836.9,588.2 838.8,590.5C840.7,592.8 847.6,598.6 849.5,601.3C851.4,604.0 855.7,618.2 857.6,617.4C859.5,616.6 866.1,596.2 868.4,593.2C870.7,590.2 878.5,586.7 880.8,587.8C883.1,588.9 889.7,602.1 891.6,604.0C893.5,605.9 898.3,607.1 899.6,606.6C900.9,606.1 903.4,600.9 905.0,598.6C906.6,596.3 913.9,582.4 915.8,583.7C917.7,585.0 922.7,606.5 923.9,612.0C925.1,617.5 926.9,639.3 928.0,639.0C929.1,638.7 933.4,618.7 934.7,609.3C936.0,599.9 939.8,551.5 941.4,544.6C943.0,537.7 949.4,538.2 950.9,540.6C952.4,543.0 955.4,560.7 956.3,568.9C957.2,577.1 958.8,618.6 960.3,622.8C961.8,627.0 968.7,610.2 971.0,610.7C973.3,611.2 981.4,626.5 983.2,628.2C985.0,630.0 987.0,633.1 988.6,628.2C990.2,623.4 997.3,584.6 999.4,579.7C1001.5,574.9 1008.1,577.5 1010.0,579.7C1011.9,581.9 1016.7,597.7 1018.2,601.3C1019.7,604.9 1023.4,616.8 1025.0,616.0C1026.6,615.2 1031.8,596.3 1034.4,593.2C1037.0,590.1 1048.2,586.9 1050.6,585.0C1053.0,583.1 1057.4,576.6 1058.7,574.3C1060.0,572.0 1062.7,562.3 1064.0,562.2C1065.3,562.1 1070.7,572.9 1072.0,573.0C1073.3,573.1 1076.1,563.9 1077.5,563.5C1078.9,563.1 1084.0,567.7 1085.6,568.9C1087.2,570.1 1092.4,576.0 1093.7,575.6C1095.0,575.2 1097.7,564.2 1099.0,564.9C1100.3,565.6 1105.6,579.3 1107.2,582.4C1108.8,585.5 1113.7,594.0 1115.3,595.9C1116.9,597.8 1121.2,601.2 1123.4,601.3C1125.6,601.4 1135.5,597.6 1136.8,597.2L1136.8,670.0C1135.7,673.2 1127.9,699.5 1126.0,702.3C1124.1,705.1 1119.3,701.1 1118.0,698.3C1116.7,695.5 1113.9,677.0 1112.6,674.0C1111.2,671.0 1106.4,673.7 1104.5,668.6C1102.6,663.5 1095.3,627.6 1093.7,622.8C1092.1,617.9 1090.2,617.3 1088.3,620.1C1086.4,622.9 1077.3,648.9 1074.9,651.1C1072.5,653.3 1065.6,645.1 1064.0,641.7C1062.4,638.3 1060.6,617.1 1058.7,617.4C1056.8,617.7 1047.6,638.5 1045.2,644.4C1042.8,650.3 1037.4,674.3 1034.4,676.7C1031.4,679.1 1018.5,670.5 1015.5,668.6C1012.5,666.7 1006.9,658.4 1004.8,657.9C1002.6,657.4 996.2,660.4 994.0,663.2C991.8,666.0 985.2,682.4 983.2,686.2C981.2,690.0 975.8,702.6 973.8,701.0C971.8,699.4 964.9,670.0 963.0,670.0C961.1,670.0 956.1,701.1 954.9,701.0C953.7,700.9 952.1,669.6 950.9,668.6C949.7,667.6 944.7,690.3 942.8,691.5C940.9,692.7 934.2,680.4 932.0,680.8C929.8,681.2 923.4,697.5 921.2,695.6C919.0,693.7 912.8,665.7 910.4,661.9C908.0,658.1 900.0,659.1 897.0,657.9C894.0,656.7 883.4,650.1 880.8,649.8C878.2,649.5 872.8,653.6 871.0,655.2C869.2,656.8 865.1,662.8 863.0,666.0C860.9,669.2 851.6,688.9 849.5,687.5C847.4,686.1 843.6,659.0 841.5,652.5C839.4,646.0 830.4,625.8 828.0,622.8C825.6,619.8 819.4,620.1 817.2,622.8C815.0,625.5 808.8,645.5 806.4,649.8C804.0,654.1 795.1,672.5 793.0,666.0C790.9,659.5 787.6,589.0 784.9,585.0C782.2,581.0 769.2,622.5 766.0,625.5C762.8,628.5 755.5,616.9 752.5,614.7C749.5,612.6 739.0,600.8 736.3,604.0C733.6,607.2 727.6,642.4 725.5,647.0C723.4,651.6 716.9,644.9 714.8,649.8C712.6,654.7 706.2,690.8 704.0,695.6C701.8,700.5 695.4,699.4 693.2,698.3C691.0,697.2 684.3,689.8 682.4,684.8C680.5,679.8 676.4,651.4 674.3,648.4C672.1,645.4 663.2,652.6 660.9,655.2C658.6,657.8 653.6,678.9 651.4,674.0C649.2,669.1 641.6,609.6 639.3,606.6C637.0,603.6 630.4,639.3 628.5,644.4C626.6,649.5 622.3,655.7 620.4,657.9C618.5,660.1 612.6,667.6 609.6,666.0C606.6,664.4 593.9,646.8 590.8,641.7C587.7,636.6 580.7,617.5 578.4,614.7C576.1,611.9 569.5,611.0 567.6,613.4C565.7,615.8 561.9,637.2 559.5,639.0C557.1,640.8 546.9,633.3 543.4,630.9C539.9,628.5 527.5,617.7 524.5,614.7C521.5,611.7 515.9,603.3 513.7,601.3C511.6,599.3 505.4,587.8 503.0,594.5C500.6,601.2 492.2,661.3 489.5,668.6C486.8,675.9 478.2,671.9 476.0,667.3C473.8,662.7 470.3,627.0 467.9,622.8C465.5,618.6 454.4,618.9 451.7,625.5C449.0,632.1 443.2,683.4 441.0,688.8C438.8,694.2 432.2,681.7 430.0,679.4C427.8,677.1 421.8,664.1 419.4,666.0C417.0,667.9 408.2,693.4 405.9,698.3C403.6,703.1 398.4,720.4 396.5,714.5C394.6,708.6 388.8,645.8 387.0,639.0C385.2,632.2 380.9,643.8 379.0,647.0C377.1,650.2 370.6,668.3 368.2,671.3C365.8,674.3 356.6,677.1 354.7,676.7C352.8,676.3 350.9,666.5 349.3,667.3C347.7,668.1 340.4,686.0 338.5,684.8C336.6,683.6 332.3,660.2 330.4,655.0C328.5,649.8 321.8,634.6 319.6,632.3C317.5,630.0 310.5,630.5 308.9,632.3C307.3,634.0 304.6,641.0 303.5,649.8C302.4,658.6 299.4,716.8 298.0,720.0C296.6,723.2 291.5,682.3 290.0,682.0C288.5,681.7 285.1,717.0 283.0,717.0C280.9,717.0 271.9,683.9 269.5,682.0C267.1,680.1 260.9,696.4 258.8,698.3C256.7,700.2 249.9,703.7 248.0,701.0C246.1,698.3 241.9,672.1 240.0,671.0C238.1,669.9 231.4,686.7 229.0,690.0C226.6,693.3 218.0,700.2 215.6,703.7C213.2,707.2 206.2,725.6 204.8,725.0C203.4,724.4 202.5,705.0 202.0,698.0C201.5,691.0 201.1,658.2 199.5,655.0C197.9,651.8 188.3,669.2 186.0,666.0C183.7,662.8 178.1,629.9 176.5,622.8C174.9,615.6 171.8,596.7 169.8,594.5C167.8,592.3 159.0,600.6 156.3,601.0C153.6,601.4 145.3,596.8 142.9,598.6C140.5,600.4 133.8,617.3 132.0,618.8C130.2,620.3 126.6,613.5 125.3,613.4C124.0,613.3 119.8,615.0 118.6,617.4C117.4,619.8 115.4,635.4 113.2,637.6C111.0,639.8 99.7,635.1 97.0,639.0C94.3,642.9 89.0,672.4 86.3,676.7C83.6,681.0 72.8,685.2 70.0,682.0C67.2,678.8 59.6,650.3 58.0,644.4C56.4,638.5 55.0,625.0 54.0,622.8C53.0,620.6 49.6,624.3 48.5,622.8C47.4,621.3 44.4,609.6 43.0,608.0C41.6,606.4 36.9,605.1 35.0,606.6C33.1,608.1 25.9,615.5 24.3,622.8C22.7,630.1 20.4,672.5 18.9,679.4C17.4,686.3 10.3,690.3 9.4,691.5Z" fill="rgba(76,175,80,0.10)"/>
<path d="M279,668 L283,718 L286,718 L284,672Z" fill="rgba(242,54,69,0.3)"/>
<path d="M9.4,536.6C10.3,539.8 17.8,566.5 18.9,569.0C20.0,571.5 19.2,560.9 20.0,562.0C20.8,563.1 25.5,579.4 27.0,579.7C28.5,580.0 33.2,566.9 35.0,565.0C36.8,563.1 42.6,560.1 44.5,560.8C46.4,561.5 52.0,570.2 54.0,571.6C56.0,573.0 63.1,572.6 64.7,574.3C66.3,576.0 68.4,586.3 70.0,589.0C71.6,591.7 78.7,602.7 80.9,601.0C83.1,599.3 89.7,575.1 91.6,571.6C93.5,568.1 97.8,565.2 99.7,566.0C101.6,566.8 108.1,577.5 110.5,579.7C112.9,581.9 121.8,590.0 124.0,587.8C126.2,585.6 130.8,563.3 132.0,558.0C133.2,552.7 134.1,537.0 136.0,535.0C137.9,533.0 149.0,536.8 151.0,538.0C153.0,539.2 155.0,546.1 156.3,547.0C157.6,547.9 163.1,545.8 164.4,547.0C165.8,548.2 168.3,559.7 169.8,559.5C171.3,559.3 177.4,544.1 179.0,544.6C180.6,545.1 184.8,559.9 186.0,565.0C187.2,570.1 190.1,595.6 191.4,596.0C192.8,596.4 198.0,574.3 199.5,569.0C201.0,563.7 204.7,544.1 206.0,543.3C207.3,542.5 211.9,552.6 213.0,560.8C214.1,569.0 215.9,619.0 217.0,625.5C218.1,632.0 222.2,628.0 223.7,625.5C225.2,623.0 229.9,603.0 231.8,601.0C233.7,599.0 240.6,602.7 242.6,605.3C244.6,607.9 250.1,626.9 252.0,627.0C253.9,627.1 259.8,609.2 261.5,606.6C263.2,604.0 267.9,600.8 269.5,601.0C271.1,601.2 276.0,604.4 277.6,609.0C279.2,613.6 284.5,647.5 285.7,647.0C286.9,646.5 288.8,610.6 290.0,604.0C291.2,597.4 296.4,581.5 298.0,581.0C299.6,580.5 303.8,596.8 306.0,598.6C308.2,600.4 317.8,601.3 319.6,598.6C321.4,595.9 322.6,575.3 323.7,571.6C324.8,567.9 328.9,563.0 330.4,562.0C331.9,561.0 337.1,556.7 338.5,562.0C339.9,567.3 342.4,610.0 344.0,614.7C345.6,619.4 352.8,610.1 354.7,609.3C356.6,608.5 361.2,606.3 362.8,606.6C364.4,606.9 369.0,617.0 370.9,612.0C372.8,607.0 379.5,563.9 381.6,556.8C383.8,549.7 390.6,538.0 392.4,540.6C394.2,543.2 397.8,573.6 399.2,582.4C400.6,591.2 404.4,625.1 405.9,628.2C407.4,631.3 411.8,614.5 414.0,613.4C416.2,612.3 425.3,618.3 427.5,617.4C429.7,616.5 434.0,609.7 435.6,604.0C437.2,598.3 441.5,563.9 443.6,560.8C445.7,557.7 454.6,571.5 457.0,573.0C459.4,574.5 466.0,577.5 467.9,575.6C469.8,573.7 474.6,556.0 476.0,554.0C477.4,552.0 480.3,553.9 481.4,555.4C482.5,556.9 485.7,569.7 486.8,569.0C487.9,568.3 490.8,551.9 492.0,548.7C493.2,545.5 497.5,536.5 498.9,536.6C500.3,536.7 504.1,548.7 505.6,550.0C507.1,551.3 511.8,548.8 513.7,550.0C515.6,551.2 522.3,560.6 524.5,562.0C526.7,563.4 533.4,562.4 535.3,563.5C537.2,564.6 541.8,572.9 543.4,573.0C545.0,573.1 549.8,570.2 551.5,564.9C553.2,559.6 558.8,524.3 560.9,520.4C563.0,516.5 571.1,521.5 573.0,525.8C574.9,530.1 578.3,560.1 579.8,563.5C581.3,566.9 586.4,557.9 588.0,559.5C589.6,561.1 594.6,574.7 596.2,579.7C597.8,584.7 602.8,611.3 604.3,609.3C605.8,607.3 609.1,564.6 611.0,559.5C612.9,554.4 621.2,556.6 623.0,558.0C624.8,559.4 627.0,573.4 628.5,573.0C630.0,572.6 636.4,557.8 638.0,554.0C639.6,550.2 643.4,536.7 644.7,535.2C646.0,533.7 650.1,534.0 651.4,539.3C652.7,544.6 656.0,582.7 658.0,587.8C660.0,592.9 669.3,589.1 671.6,590.5C673.9,591.9 679.4,598.9 681.0,601.3C682.6,603.7 686.6,610.9 687.8,614.7C689.0,618.5 692.0,636.8 693.2,639.0C694.4,641.2 698.6,639.8 700.0,636.3C701.4,632.8 705.2,607.8 706.7,604.0C708.2,600.2 712.5,602.5 714.8,598.6C717.1,594.7 727.5,567.6 729.6,564.9C731.8,562.2 734.6,572.7 736.3,571.6C738.0,570.5 744.7,558.2 747.0,554.0C749.3,549.8 756.5,531.4 759.2,529.8C761.9,528.2 772.1,535.2 774.0,537.9C775.9,540.6 776.6,554.5 778.0,556.8C779.4,559.1 786.1,563.8 787.5,560.8C788.9,557.8 790.5,528.5 791.6,527.1C792.7,525.8 796.8,541.4 798.3,547.3C799.8,553.2 804.5,583.0 806.4,586.4C808.3,589.8 814.8,581.8 817.2,581.0C819.6,580.2 828.5,577.3 830.7,578.3C832.9,579.2 836.9,588.2 838.8,590.5C840.7,592.8 847.6,598.6 849.5,601.3C851.4,604.0 855.7,618.2 857.6,617.4C859.5,616.6 866.1,596.2 868.4,593.2C870.7,590.2 878.5,586.7 880.8,587.8C883.1,588.9 889.7,602.1 891.6,604.0C893.5,605.9 898.3,607.1 899.6,606.6C900.9,606.1 903.4,600.9 905.0,598.6C906.6,596.3 913.9,582.4 915.8,583.7C917.7,585.0 922.7,606.5 923.9,612.0C925.1,617.5 926.9,639.3 928.0,639.0C929.1,638.7 933.4,618.7 934.7,609.3C936.0,599.9 939.8,551.5 941.4,544.6C943.0,537.7 949.4,538.2 950.9,540.6C952.4,543.0 955.4,560.7 956.3,568.9C957.2,577.1 958.8,618.6 960.3,622.8C961.8,627.0 968.7,610.2 971.0,610.7C973.3,611.2 981.4,626.5 983.2,628.2C985.0,630.0 987.0,633.1 988.6,628.2C990.2,623.4 997.3,584.6 999.4,579.7C1001.5,574.9 1008.1,577.5 1010.0,579.7C1011.9,581.9 1016.7,597.7 1018.2,601.3C1019.7,604.9 1023.4,616.8 1025.0,616.0C1026.6,615.2 1031.8,596.3 1034.4,593.2C1037.0,590.1 1048.2,586.9 1050.6,585.0C1053.0,583.1 1057.4,576.6 1058.7,574.3C1060.0,572.0 1062.7,562.3 1064.0,562.2C1065.3,562.1 1070.7,572.9 1072.0,573.0C1073.3,573.1 1076.1,563.9 1077.5,563.5C1078.9,563.1 1084.0,567.7 1085.6,568.9C1087.2,570.1 1092.4,576.0 1093.7,575.6C1095.0,575.2 1097.7,564.2 1099.0,564.9C1100.3,565.6 1105.6,579.3 1107.2,582.4C1108.8,585.5 1113.7,594.0 1115.3,595.9C1116.9,597.8 1121.2,601.2 1123.4,601.3C1125.6,601.4 1135.5,597.6 1136.8,597.2" fill="none" stroke="#4caf50" stroke-width="1.1"/>
<path d="M9.4,691.5C10.3,690.3 17.4,686.3 18.9,679.4C20.4,672.5 22.7,630.1 24.3,622.8C25.9,615.5 33.1,608.1 35.0,606.6C36.9,605.1 41.6,606.4 43.0,608.0C44.4,609.6 47.4,621.3 48.5,622.8C49.6,624.3 53.0,620.6 54.0,622.8C55.0,625.0 56.4,638.5 58.0,644.4C59.6,650.3 67.2,678.8 70.0,682.0C72.8,685.2 83.6,681.0 86.3,676.7C89.0,672.4 94.3,642.9 97.0,639.0C99.7,635.1 111.0,639.8 113.2,637.6C115.4,635.4 117.4,619.8 118.6,617.4C119.8,615.0 124.0,613.3 125.3,613.4C126.6,613.5 130.2,620.3 132.0,618.8C133.8,617.3 140.5,600.4 142.9,598.6C145.3,596.8 153.6,601.4 156.3,601.0C159.0,600.6 167.8,592.3 169.8,594.5C171.8,596.7 174.9,615.6 176.5,622.8C178.1,629.9 183.7,662.8 186.0,666.0C188.3,669.2 197.9,651.8 199.5,655.0C201.1,658.2 201.5,691.0 202.0,698.0C202.5,705.0 203.4,724.4 204.8,725.0C206.2,725.6 213.2,707.2 215.6,703.7C218.0,700.2 226.6,693.3 229.0,690.0C231.4,686.7 238.1,669.9 240.0,671.0C241.9,672.1 246.1,698.3 248.0,701.0C249.9,703.7 256.7,700.2 258.8,698.3C260.9,696.4 267.1,680.1 269.5,682.0C271.9,683.9 280.9,717.0 283.0,717.0C285.1,717.0 288.5,681.7 290.0,682.0C291.5,682.3 296.6,723.2 298.0,720.0C299.4,716.8 302.4,658.6 303.5,649.8C304.6,641.0 307.3,634.0 308.9,632.3C310.5,630.5 317.5,630.0 319.6,632.3C321.8,634.6 328.5,649.8 330.4,655.0C332.3,660.2 336.6,683.6 338.5,684.8C340.4,686.0 347.7,668.1 349.3,667.3C350.9,666.5 352.8,676.3 354.7,676.7C356.6,677.1 365.8,674.3 368.2,671.3C370.6,668.3 377.1,650.2 379.0,647.0C380.9,643.8 385.2,632.2 387.0,639.0C388.8,645.8 394.6,708.6 396.5,714.5C398.4,720.4 403.6,703.1 405.9,698.3C408.2,693.4 417.0,667.9 419.4,666.0C421.8,664.1 427.8,677.1 430.0,679.4C432.2,681.7 438.8,694.2 441.0,688.8C443.2,683.4 449.0,632.1 451.7,625.5C454.4,618.9 465.5,618.6 467.9,622.8C470.3,627.0 473.8,662.7 476.0,667.3C478.2,671.9 486.8,675.9 489.5,668.6C492.2,661.3 500.6,601.2 503.0,594.5C505.4,587.8 511.6,599.3 513.7,601.3C515.9,603.3 521.5,611.7 524.5,614.7C527.5,617.7 539.9,628.5 543.4,630.9C546.9,633.3 557.1,640.8 559.5,639.0C561.9,637.2 565.7,615.8 567.6,613.4C569.5,611.0 576.1,611.9 578.4,614.7C580.7,617.5 587.7,636.6 590.8,641.7C593.9,646.8 606.6,664.4 609.6,666.0C612.6,667.6 618.5,660.1 620.4,657.9C622.3,655.7 626.6,649.5 628.5,644.4C630.4,639.3 637.0,603.6 639.3,606.6C641.6,609.6 649.2,669.1 651.4,674.0C653.6,678.9 658.6,657.8 660.9,655.2C663.2,652.6 672.1,645.4 674.3,648.4C676.4,651.4 680.5,679.8 682.4,684.8C684.3,689.8 691.0,697.2 693.2,698.3C695.4,699.4 701.8,700.5 704.0,695.6C706.2,690.8 712.6,654.7 714.8,649.8C716.9,644.9 723.4,651.6 725.5,647.0C727.6,642.4 733.6,607.2 736.3,604.0C739.0,600.8 749.5,612.6 752.5,614.7C755.5,616.9 762.8,628.5 766.0,625.5C769.2,622.5 782.2,581.0 784.9,585.0C787.6,589.0 790.9,659.5 793.0,666.0C795.1,672.5 804.0,654.1 806.4,649.8C808.8,645.5 815.0,625.5 817.2,622.8C819.4,620.1 825.6,619.8 828.0,622.8C830.4,625.8 839.4,646.0 841.5,652.5C843.6,659.0 847.4,686.1 849.5,687.5C851.6,688.9 860.9,669.2 863.0,666.0C865.1,662.8 869.2,656.8 871.0,655.2C872.8,653.6 878.2,649.5 880.8,649.8C883.4,650.1 894.0,656.7 897.0,657.9C900.0,659.1 908.0,658.1 910.4,661.9C912.8,665.7 919.0,693.7 921.2,695.6C923.4,697.5 929.8,681.2 932.0,680.8C934.2,680.4 940.9,692.7 942.8,691.5C944.7,690.3 949.7,667.6 950.9,668.6C952.1,669.6 953.7,700.9 954.9,701.0C956.1,701.1 961.1,670.0 963.0,670.0C964.9,670.0 971.8,699.4 973.8,701.0C975.8,702.6 981.2,690.0 983.2,686.2C985.2,682.4 991.8,666.0 994.0,663.2C996.2,660.4 1002.6,657.4 1004.8,657.9C1006.9,658.4 1012.5,666.7 1015.5,668.6C1018.5,670.5 1031.4,679.1 1034.4,676.7C1037.4,674.3 1042.8,650.3 1045.2,644.4C1047.6,638.5 1056.8,617.7 1058.7,617.4C1060.6,617.1 1062.4,638.3 1064.0,641.7C1065.6,645.1 1072.5,653.3 1074.9,651.1C1077.3,648.9 1086.4,622.9 1088.3,620.1C1090.2,617.3 1092.1,617.9 1093.7,622.8C1095.3,627.6 1102.6,663.5 1104.5,668.6C1106.4,673.7 1111.2,671.0 1112.6,674.0C1113.9,677.0 1116.7,695.5 1118.0,698.3C1119.3,701.1 1124.1,705.1 1126.0,702.3C1127.9,699.5 1135.7,673.2 1136.8,670.0" fill="none" stroke="#4caf50" stroke-width="1.1"/>
<polyline points="10.0,606.6 10.8,610.1 11.6,601.0 12.4,595.3 13.2,600.8 14.0,602.1 14.8,585.5 15.6,593.6 16.4,595.1 17.2,586.9 18.0,583.5 18.8,584.8 19.6,593.8 20.4,596.1 21.2,587.0 22.0,575.4 22.8,591.3 23.6,581.0 24.4,579.8 25.2,575.9 26.0,577.6 26.8,572.5 27.6,577.9 28.4,558.9 29.2,568.1 30.0,574.3 30.8,574.2 31.6,573.1 32.4,582.7 33.2,612.3 34.0,613.3 34.8,616.4 35.6,605.2 36.4,618.7 37.2,609.9 38.0,596.9 38.8,588.5 39.6,603.7 40.4,606.8 41.2,594.0 42.0,583.7 42.8,594.9 43.6,589.6 44.4,584.4 45.2,591.3 46.0,590.7 46.8,586.5 47.6,581.1 48.4,574.8 49.2,576.4 50.0,577.6 50.8,572.2 51.6,572.1 52.4,608.2 53.2,607.7 54.0,611.2 54.8,640.0 55.6,639.6 56.4,636.8 57.2,622.9 58.0,625.3 58.8,635.7 59.6,610.8 60.4,608.3 61.2,618.8 62.0,616.1 62.8,598.5 63.6,602.5 64.4,628.4 65.2,638.9 66.0,634.7 66.8,640.8 67.6,658.4 68.4,662.6 69.2,663.9 70.0,672.9 70.8,669.3 71.6,658.2 72.4,656.0 73.2,634.1 74.0,639.7 74.8,617.4 75.6,602.8 76.4,620.9 77.2,632.9 78.0,632.1 78.8,628.6 79.6,624.0 80.4,628.9 81.2,638.1 82.0,642.6 82.8,630.1 83.6,633.5 84.4,634.8 85.2,622.9 86.0,603.1 86.8,617.7 87.6,619.2 88.4,608.0 89.2,599.3 90.0,601.4 90.8,598.6 91.6,590.0 92.4,574.3 93.2,599.6 94.0,607.0 94.8,612.2 95.6,605.1 96.4,630.1 97.2,634.7 98.0,625.8 98.8,646.9 99.6,655.4 100.4,648.0 101.2,628.6 102.0,626.7 102.8,629.1 103.6,620.5 104.4,601.5 105.2,604.1 106.0,617.8 106.8,594.3 107.6,584.1 108.4,585.5 109.2,596.8 110.0,598.3 110.8,580.1 111.6,582.0 112.4,590.2 113.2,599.4 114.0,591.2 114.8,587.1 115.6,595.1 116.4,604.8 117.2,590.3 118.0,591.2 118.8,596.7 119.6,585.8 120.4,575.2 121.2,578.4 122.0,583.8 122.8,573.5 123.6,570.2 124.4,569.4 125.2,568.3 126.0,567.0 126.8,559.4 127.6,563.3 128.4,574.6 129.2,561.6 130.0,546.2 130.8,562.2 131.6,564.9 132.4,557.8 133.2,576.7 134.0,590.4 134.8,580.3 135.6,585.1 136.4,601.7 137.2,595.4 138.0,581.9 138.8,567.8 139.6,576.6 140.4,584.0 141.2,571.2 142.0,557.3 142.8,552.6 143.6,563.4 144.4,567.5 145.2,556.5 146.0,548.3 146.8,550.4 147.6,560.5 148.4,551.8 149.2,541.6 150.0,555.1 150.8,559.7 151.6,560.2 152.4,567.4 153.2,584.0 154.0,598.6 154.8,589.3 155.6,565.3 156.4,569.8 157.2,583.0 158.0,581.1 158.8,567.9 159.6,566.3 160.4,574.0 161.2,574.0 162.0,574.7 162.8,566.0 163.6,564.8 164.4,567.4 165.2,577.0 166.0,571.5 166.8,569.8 167.6,574.9 168.4,590.0 169.2,584.5 170.0,577.7 170.8,591.2 171.6,593.5 172.4,599.0 173.2,596.0 174.0,613.2 174.8,623.2 175.6,620.9 176.4,615.7 177.2,627.0 178.0,650.4 178.8,643.8 179.6,638.5 180.4,651.3 181.2,643.4 182.0,636.3 182.8,631.0 183.6,627.1 184.4,628.5 185.2,630.9 186.0,618.1 186.8,620.6 187.6,622.0 188.4,623.0 189.2,616.0 190.0,598.3 190.8,606.5 191.6,605.9 192.4,596.1 193.2,589.5 194.0,603.0 194.8,588.0 195.6,582.4 196.4,594.4 197.2,621.3 198.0,623.5 198.8,633.6 199.6,664.7 200.4,686.5 201.2,692.3 202.0,678.1 202.8,684.6 203.6,689.9 204.4,679.2 205.2,673.0 206.0,676.0 206.8,676.9 207.6,669.8 208.4,657.2 209.2,657.1 210.0,666.5 210.8,662.2 211.6,640.5 212.4,650.0 213.2,654.1 214.0,648.2 214.8,626.3 215.6,629.1 216.4,654.2 217.2,659.3 218.0,651.4 218.8,658.9 219.6,684.3 220.4,679.5 221.2,664.0 222.0,669.5 222.8,669.0 223.6,642.0 224.4,638.7 225.2,653.7 226.0,646.4 226.8,629.5 227.6,634.7 228.4,626.2 229.2,610.5 230.0,619.1 230.8,638.9 231.6,642.7 232.4,629.4 233.2,622.4 234.0,631.4 234.8,645.1 235.6,635.6 236.4,641.3 237.2,655.2 238.0,662.4 238.8,658.6 239.6,661.3 240.4,657.1 241.2,666.7 242.0,673.7 242.8,675.2 243.6,674.4 244.4,686.7 245.2,688.2 246.0,694.0 246.8,677.6 247.6,685.7 248.4,679.2 249.2,659.2 250.0,649.4 250.8,664.6 251.6,654.0 252.4,632.3 253.2,631.3 254.0,628.3 254.8,631.9 255.6,615.4 256.4,599.9 257.2,621.7 258.0,623.8 258.8,619.3 259.6,601.7 260.4,602.7 261.2,610.6 262.0,603.0 262.8,594.1 263.6,607.1 264.4,632.0 265.2,653.2 266.0,644.8 266.8,646.5 267.6,665.0 268.4,684.9 269.2,688.8 270.0,679.4 270.8,686.5 271.6,702.7 272.4,693.0 273.2,689.1 274.0,692.0 274.8,708.0 275.6,694.0 276.4,695.7 277.2,714.5 278.0,713.3 278.8,701.1 279.6,699.5 280.4,720.6 281.2,726.1 282.0,699.6 282.8,684.8 283.6,682.3 284.4,682.3 285.2,666.3 286.0,653.0 286.8,639.6 287.6,640.4 288.4,631.3 289.2,611.2 290.0,601.0 290.8,614.8 291.6,624.3 292.4,611.2 293.2,612.7 294.0,624.4 294.8,613.0 295.6,607.9 296.4,618.4 297.2,625.1 298.0,611.4 298.8,616.1 299.6,632.1 300.4,629.4 301.2,626.5 302.0,616.1 302.8,611.1 303.6,617.2 304.4,619.7 305.2,616.3 306.0,619.9 306.8,620.6 307.6,618.0 308.4,599.3 309.2,611.3 310.0,620.3 310.8,607.2 311.6,591.9 312.4,594.9 313.2,598.8 314.0,586.4 314.8,588.7 315.6,585.8 316.4,587.2 317.2,590.2 318.0,573.2 318.8,581.5 319.6,586.0 320.4,572.1 321.2,565.4 322.0,575.4 322.8,584.0 323.6,591.3 324.4,580.8 325.2,595.6 326.0,615.2 326.8,607.1 327.6,605.3 328.4,610.2 329.2,629.7 330.0,636.3 330.8,622.8 331.6,628.0 332.4,641.0 333.2,641.8 334.0,635.3 334.8,648.4 335.6,649.3 336.4,649.7 337.2,637.9 338.0,636.7 338.8,648.9 339.6,642.2 340.4,631.7 341.2,633.8 342.0,645.3 342.8,631.7 343.6,620.5 344.4,623.4 345.2,634.6 346.0,626.5 346.8,623.8 347.6,634.6 348.4,645.0 349.2,643.9 350.0,642.7 350.8,648.2 351.6,660.5 352.4,661.9 353.2,661.4 354.0,661.5 354.8,664.5 355.6,658.6 356.4,647.0 357.2,629.9 358.0,640.6 358.8,641.4 359.6,635.0 360.4,614.2 361.2,609.0 362.0,630.8 362.8,624.5 363.6,609.9 364.4,614.6 365.2,616.5 366.0,610.9 366.8,605.2 367.6,599.4 368.4,616.0 369.2,606.0 370.0,591.0 370.8,594.6 371.6,603.7 372.4,597.7 373.2,585.5 374.0,588.9 374.8,596.7 375.6,588.0 376.4,577.8 377.2,564.5 378.0,569.2 378.8,574.8 379.6,571.5 380.4,569.6 381.2,564.1 382.0,580.9 382.8,589.1 383.6,592.4 384.4,610.5 385.2,625.5 386.0,632.9 386.8,634.6 387.6,627.5 388.4,639.7 389.2,659.7 390.0,661.5 390.8,658.8 391.6,663.7 392.4,672.5 393.2,688.5 394.0,681.8 394.8,675.6 395.6,672.6 396.4,684.4 397.2,668.2 398.0,663.8 398.8,674.0 399.6,679.2 400.4,656.3 401.2,650.1 402.0,654.2 402.8,653.9 403.6,646.9 404.4,641.2 405.2,631.9 406.0,630.4 406.8,641.5 407.6,654.0 408.4,646.0 409.2,648.6 410.0,668.5 410.8,682.1 411.6,664.4 412.4,652.7 413.2,646.9 414.0,648.1 414.8,642.2 415.6,624.2 416.4,620.1 417.2,626.7 418.0,629.4 418.8,624.0 419.6,631.8 420.4,642.8 421.2,655.7 422.0,650.3 422.8,642.2 423.6,659.8 424.4,673.8 425.2,656.9 426.0,667.6 426.8,687.1 427.6,682.5 428.4,657.1 429.2,657.1 430.0,653.2 430.8,634.7 431.6,609.1 432.4,604.8 433.2,604.6 434.0,592.7 434.8,584.4 435.6,581.7 436.4,578.0 437.2,587.1 438.0,581.0 438.8,572.2 439.6,571.1 440.4,594.2 441.2,580.5 442.0,572.0 442.8,579.1 443.6,592.9 444.4,577.6 445.2,578.1 446.0,583.1 446.8,597.5 447.6,578.4 448.4,586.9 449.2,600.9 450.0,605.6 450.8,600.6 451.6,596.5 452.4,616.8 453.2,613.4 454.0,610.0 454.8,595.0 455.6,596.4 456.4,607.3 457.2,601.6 458.0,592.4 458.8,591.2 459.6,593.7 460.4,597.1 461.2,589.3 462.0,588.6 462.8,600.5 463.6,601.4 464.4,585.7 465.2,579.0 466.0,593.1 466.8,594.0 467.6,581.3 468.4,597.5 469.2,606.7 470.0,599.8 470.8,609.4 471.6,629.8 472.4,640.2 473.2,638.8 474.0,650.6 474.8,640.1 475.6,621.8 476.4,626.3 477.2,636.7 478.0,626.5 478.8,604.7 479.6,588.3 480.4,598.9 481.2,596.7 482.0,576.8 482.8,585.2 483.6,591.6 484.4,589.0 485.2,580.6 486.0,570.2 486.8,570.1 487.6,570.7 488.4,555.4 489.2,559.7 490.0,562.1 490.8,557.1 491.6,552.5 492.4,547.4 493.2,554.7 494.0,561.6 494.8,542.8 495.6,533.2 496.4,552.8 497.2,561.9 498.0,555.3 498.8,554.5 499.6,560.3 500.4,578.7 501.2,581.9 502.0,567.6 502.8,590.3 503.6,586.4 504.4,601.7 505.2,583.6 506.0,588.0 506.8,585.8 507.6,583.6 508.4,575.1 509.2,577.1 510.0,587.1 510.8,572.2 511.6,559.8 512.4,563.4 513.2,565.8 514.0,550.2 514.8,560.4 515.6,573.8 516.4,575.6 517.2,578.5 518.0,582.4 518.8,590.6 519.6,603.5 520.4,606.7 521.2,598.0 522.0,594.4 522.8,599.4 523.6,582.4 524.4,569.4 525.2,565.9 526.0,578.3 526.8,578.7 527.6,562.5 528.4,561.3 529.2,589.3 530.0,592.1 530.8,597.7 531.6,597.2 532.4,612.0 533.2,614.1 534.0,602.8 534.8,590.1 535.6,600.7 536.4,602.7 537.2,599.4 538.0,595.2 538.8,590.7 539.6,590.3 540.4,564.5 541.2,576.1 542.0,591.4 542.8,584.2 543.6,597.4 544.4,606.1 545.2,615.3 546.0,615.7 546.8,626.2 547.6,630.9 548.4,623.2 549.2,614.5 550.0,597.3 550.8,602.4 551.6,598.0 552.4,590.3 553.2,578.2 554.0,577.0 554.8,580.7 555.6,571.8 556.4,552.1 557.2,542.5 558.0,551.4 558.8,545.0 559.6,533.6 560.4,524.6 561.2,546.5 562.0,558.5 562.8,564.5 563.6,569.3 564.4,595.0 565.2,591.4 566.0,597.8 566.8,598.1 567.6,595.3 568.4,576.0 569.2,570.7 570.0,576.3 570.8,562.0 571.6,546.5 572.4,569.8 573.2,580.2 574.0,571.3 574.8,573.3 575.6,584.1 576.4,582.2 577.2,583.0 578.0,604.8 578.8,603.3 579.6,598.8 580.4,594.4 581.2,612.3 582.0,607.6 582.8,596.6 583.6,615.5 584.4,618.5 585.2,618.9 586.0,612.6 586.8,621.1 587.6,629.3 588.4,624.8 589.2,628.6 590.0,630.1 590.8,646.1 591.6,640.0 592.4,635.4 593.2,635.6 594.0,651.4 594.8,652.6 595.6,633.2 596.4,637.0 597.2,636.1 598.0,648.5 598.8,641.4 599.6,638.0 600.4,652.8 601.2,646.5 602.0,635.2 602.8,633.5 603.6,637.5 604.4,636.4 605.2,626.3 606.0,599.9 606.8,588.8 607.6,586.5 608.4,586.2 609.2,571.6 610.0,567.8 610.8,581.3 611.6,601.5 612.4,598.3 613.2,598.7 614.0,603.4 614.8,622.8 615.6,621.0 616.4,618.2 617.2,633.1 618.0,643.6 618.8,651.7 619.6,634.6 620.4,616.6 621.2,623.7 622.0,633.5 622.8,609.2 623.6,610.8 624.4,620.5 625.2,609.6 626.0,593.7 626.8,587.4 627.6,592.3 628.4,588.7 629.2,569.1 630.0,564.7 630.8,573.9 631.6,576.5 632.4,574.9 633.2,569.7 634.0,563.7 634.8,576.0 635.6,562.6 636.4,555.4 637.2,553.3 638.0,565.9 638.8,567.8 639.6,567.1 640.4,582.4 641.2,597.7 642.0,614.7 642.8,636.1 643.6,635.2 644.4,638.6 645.2,647.1 646.0,635.8 646.8,641.7 647.6,649.0 648.4,646.6 649.2,651.6 650.0,643.6 650.8,653.6 651.6,662.2 652.4,661.9 653.2,641.9 654.0,636.1 654.8,634.3 655.6,622.9 656.4,596.6 657.2,608.8 658.0,603.2 658.8,597.6 659.6,597.4 660.4,613.3 661.2,620.9 662.0,610.3 662.8,616.3 663.6,625.5 664.4,629.0 665.2,625.8 666.0,631.7 666.8,647.7 667.6,647.2 668.4,641.0 669.2,638.6 670.0,652.5 670.8,655.2 671.6,650.0 672.4,658.9 673.2,669.6 674.0,654.7 674.8,668.9 675.6,661.8 676.4,678.9 677.2,678.1 678.0,668.5 678.8,686.6 679.6,697.9 680.4,688.2 681.2,689.1 682.0,703.8 682.8,702.2 683.6,679.6 684.4,679.6 685.2,690.0 686.0,695.8 686.8,677.4 687.6,677.9 688.4,691.3 689.2,676.8 690.0,668.9 690.8,674.5 691.6,664.5 692.4,653.8 693.2,649.6 694.0,640.0 694.8,650.0 695.6,654.3 696.4,659.9 697.2,648.0 698.0,641.1 698.8,664.3 699.6,689.1 700.4,676.4 701.2,655.8 702.0,635.7 702.8,631.2 703.6,628.5 704.4,606.4 705.2,598.1 706.0,612.2 706.8,617.1 707.6,597.3 708.4,602.5 709.2,619.1 710.0,625.6 710.8,619.2 711.6,617.2 712.4,626.8 713.2,632.6 714.0,628.4 714.8,613.6 715.6,627.4 716.4,636.3 717.2,617.9 718.0,618.8 718.8,622.8 719.6,618.2 720.4,601.6 721.2,589.6 722.0,598.9 722.8,593.2 723.6,580.0 724.4,584.1 725.2,589.1 726.0,579.5 726.8,564.3 727.6,573.0 728.4,582.7 729.2,585.3 730.0,585.4 730.8,586.8 731.6,593.4 732.4,599.4 733.2,606.9 734.0,588.0 734.8,602.6 735.6,609.6 736.4,592.9 737.2,594.1 738.0,592.1 738.8,589.4 739.6,583.3 740.4,566.9 741.2,584.3 742.0,578.9 742.8,579.5 743.6,569.8 744.4,579.2 745.2,580.8 746.0,575.1 746.8,582.0 747.6,599.9 748.4,613.2 749.2,599.0 750.0,603.3 750.8,592.5 751.6,599.3 752.4,572.1 753.2,578.0 754.0,573.8 754.8,566.9 755.6,551.1 756.4,536.2 757.2,531.1 758.0,546.6 758.8,559.5 759.6,549.3 760.4,554.4 761.2,577.9 762.0,578.5 762.8,594.0 763.6,592.7 764.4,588.6 765.2,593.8 766.0,592.8 766.8,587.8 767.6,567.8 768.4,582.9 769.2,598.1 770.0,577.5 770.8,572.1 771.6,574.4 772.4,582.4 773.2,568.5 774.0,563.7 774.8,571.4 775.6,568.9 776.4,561.2 777.2,554.7 778.0,558.8 778.8,567.2 779.6,559.0 780.4,564.2 781.2,573.3 782.0,568.8 782.8,572.3 783.6,568.5 784.4,581.1 785.2,586.4 786.0,607.4 786.8,608.5 787.6,622.5 788.4,640.9 789.2,654.8 790.0,657.0 790.8,654.9 791.6,662.8 792.4,646.1 793.2,628.0 794.0,635.8 794.8,640.6 795.6,630.9 796.4,612.8 797.2,606.0 798.0,619.9 798.8,611.0 799.6,609.0 800.4,617.8 801.2,634.0 802.0,622.0 802.8,618.8 803.6,635.8 804.4,646.4 805.2,651.6 806.0,648.3 806.8,622.9 807.6,624.0 808.4,607.4 809.2,588.8 810.0,583.4 810.8,579.1 811.6,587.4 812.4,599.4 813.2,583.8 814.0,579.9 814.8,586.1 815.6,603.5 816.4,586.3 817.2,583.4 818.0,597.4 818.8,598.1 819.6,583.8 820.4,589.9 821.2,598.6 822.0,586.5 822.8,582.6 823.6,598.8 824.4,600.2 825.2,596.4 826.0,589.8 826.8,611.8 827.6,621.0 828.4,625.0 829.2,627.9 830.0,646.3 830.8,648.2 831.6,639.0 832.4,644.5 833.2,650.5 834.0,662.7 834.8,653.5 835.6,646.7 836.4,661.3 837.2,679.1 838.0,678.1 838.8,659.4 839.6,664.0 840.4,677.9 841.2,680.2 842.0,672.2 842.8,668.3 843.6,681.6 844.4,671.4 845.2,652.3 846.0,663.6 846.8,663.9 847.6,640.4 848.4,627.4 849.2,643.3 850.0,639.6 850.8,619.4 851.6,607.4 852.4,623.6 853.2,619.8 854.0,607.5 854.8,610.6 855.6,628.3 856.4,630.1 857.2,616.0 858.0,610.4 858.8,610.8 859.6,616.9 860.4,605.7 861.2,594.0 862.0,603.2 862.8,601.4 863.6,602.8 864.4,596.6 865.2,600.6 866.0,605.6 866.8,600.8 867.6,610.7 868.4,620.7 869.2,632.2 870.0,632.8 870.8,628.2 871.6,631.6 872.4,642.1 873.2,626.5 874.0,619.9 874.8,624.9 875.6,633.9 876.4,621.6 877.2,621.0 878.0,615.7 878.8,625.2 879.6,625.9 880.4,617.3 881.2,621.4 882.0,637.9 882.8,633.2 883.6,621.4 884.4,635.9 885.2,634.5 886.0,631.9 886.8,626.8 887.6,623.8 888.4,634.7 889.2,650.1 890.0,644.1 890.8,649.3 891.6,643.5 892.4,626.8 893.2,635.2 894.0,636.1 894.8,628.8 895.6,616.0 896.4,610.8 897.2,625.8 898.0,609.1 898.8,598.3 899.6,596.1 900.4,597.1 901.2,613.3 902.0,601.4 902.8,611.0 903.6,614.5 904.4,611.3 905.2,610.8 906.0,620.1 906.8,633.3 907.6,642.8 908.4,643.4 909.2,639.4 910.0,652.8 910.8,657.3 911.6,654.4 912.4,661.1 913.2,671.2 914.0,672.8 914.8,674.1 915.6,678.6 916.4,678.9 917.2,665.0 918.0,658.0 918.8,649.2 919.6,655.0 920.4,662.0 921.2,651.3 922.0,647.8 922.8,649.1 923.6,658.2 924.4,651.4 925.2,638.9 926.0,633.4 926.8,627.5 927.6,634.7 928.4,619.4 929.2,605.8 930.0,613.4 930.8,608.2 931.6,595.1 932.4,582.9 933.2,584.2 934.0,584.4 934.8,569.5 935.6,571.6 936.4,576.1 937.2,569.0 938.0,563.5 938.8,577.4 939.6,583.6 940.4,586.9 941.2,590.2 942.0,614.6 942.8,625.0 943.6,618.3 944.4,624.2 945.2,630.2 946.0,647.1 946.8,649.1 947.6,650.5 948.4,651.6 949.2,656.7 950.0,666.8 950.8,646.5 951.6,649.6 952.4,648.9 953.2,660.1 954.0,652.3 954.8,634.6 955.6,629.2 956.4,650.8 957.2,641.5 958.0,627.0 958.8,636.3 959.6,638.2 960.4,643.1 961.2,653.9 962.0,644.7 962.8,662.2 963.6,677.6 964.4,670.6 965.2,670.9 966.0,686.6 966.8,694.4 967.6,695.2 968.4,686.9 969.2,669.4 970.0,678.6 970.8,680.5 971.6,681.3 972.4,663.2 973.2,657.8 974.0,659.8 974.8,652.6 975.6,650.7 976.4,660.1 977.2,660.2 978.0,638.9 978.8,643.4 979.6,648.1 980.4,634.6 981.2,621.1 982.0,641.0 982.8,635.7 983.6,632.2 984.4,619.3 985.2,628.5 986.0,631.1 986.8,629.8 987.6,616.9 988.4,608.7 989.2,623.0 990.0,617.4 990.8,608.7 991.6,606.3 992.4,604.5 993.2,606.0 994.0,604.7 994.8,594.4 995.6,587.6 996.4,604.2 997.2,591.7 998.0,583.4 998.8,589.1 999.6,585.5 1000.4,594.9 1001.2,608.2 1002.0,602.2 1002.8,595.0 1003.6,598.6 1004.4,611.2 1005.2,618.6 1006.0,621.5 1006.8,622.0 1007.6,628.7 1008.4,639.2 1009.2,629.8 1010.0,635.1 1010.8,653.8 1011.6,650.7 1012.4,651.7 1013.2,641.7 1014.0,653.1 1014.8,667.1 1015.6,665.6 1016.4,662.2 1017.2,649.8 1018.0,662.0 1018.8,661.8 1019.6,650.6 1020.4,643.2 1021.2,653.6 1022.0,652.9 1022.8,635.6 1023.6,640.3 1024.4,649.9 1025.2,639.9 1026.0,616.6 1026.8,622.9 1027.6,626.2 1028.4,622.8 1029.2,609.6 1030.0,609.9 1030.8,616.0 1031.6,603.9 1032.4,590.3 1033.2,592.4 1034.0,603.4 1034.8,600.9 1035.6,588.0 1036.4,602.3 1037.2,608.2 1038.0,605.1 1038.8,616.3 1039.6,623.4 1040.4,628.6 1041.2,610.5 1042.0,608.2 1042.8,617.3 1043.6,610.6 1044.4,605.9 1045.2,607.2 1046.0,597.9 1046.8,589.3 1047.6,588.7 1048.4,602.7 1049.2,596.4 1050.0,580.6 1050.8,576.6 1051.6,573.9 1052.4,583.4 1053.2,580.0 1054.0,581.2 1054.8,583.3 1055.6,604.2 1056.4,607.9 1057.2,607.0 1058.0,603.7 1058.8,623.0 1059.6,640.6 1060.4,646.3 1061.2,636.9 1062.0,636.6 1062.8,630.3 1063.6,613.0 1064.4,619.5 1065.2,621.6 1066.0,622.1 1066.8,602.2 1067.6,602.4 1068.4,629.9 1069.2,642.0 1070.0,624.9 1070.8,610.9 1071.6,604.9 1072.4,611.3 1073.2,592.1 1074.0,578.9 1074.8,577.6 1075.6,576.1 1076.4,566.7 1077.2,578.7 1078.0,596.6 1078.8,611.0 1079.6,608.5 1080.4,610.4 1081.2,616.0 1082.0,613.0 1082.8,609.2 1083.6,593.7 1084.4,599.3 1085.2,608.5 1086.0,595.5 1086.8,589.7 1087.6,598.4 1088.4,592.5 1089.2,584.9 1090.0,592.7 1090.8,620.8 1091.6,617.2 1092.4,615.0 1093.2,633.8 1094.0,653.4 1094.8,632.7 1095.6,643.3 1096.4,662.9 1097.2,660.7 1098.0,639.8 1098.8,637.2 1099.6,639.8 1100.4,631.0 1101.2,617.2 1102.0,615.8 1102.8,624.2 1103.6,626.5 1104.4,616.6 1105.2,607.0 1106.0,602.4 1106.8,615.6 1107.6,606.3 1108.4,601.3 1109.2,617.1 1110.0,637.1 1110.8,635.4 1111.6,631.8 1112.4,667.2 1113.2,685.0 1114.0,690.4 1114.8,676.5 1115.6,672.7 1116.4,673.1 1117.2,645.3 1118.0,630.3 1118.8,631.8 1119.6,646.7 1120.4,631.2 1121.2,614.2 1122.0,614.4 1122.8,618.7 1123.6,612.0 1124.4,608.1 1125.2,623.3 1126.0,638.3 1126.8,627.1 1127.6,640.7 1128.4,638.8 1129.2,656.7 1130.0,652.0 1130.8,638.5 1131.6,628.2 1132.4,630.3 1133.2,624.9 1134.0,600.3 1134.8,610.0 1135.6,621.0 1136.4,633.0 1137.2,638.8" fill="none" stroke="#7e57c2" stroke-width="1"/>
<path d="M9.4,614.7C10.5,616.5 14.0,626.9 16.0,625.5C18.0,624.1 18.4,613.2 21.6,606.6C24.8,600.0 31.4,588.7 35.0,585.6C38.6,582.5 39.8,585.2 43.0,587.8C46.2,590.4 50.6,597.5 54.0,601.0C57.4,604.5 60.2,603.1 63.3,609.0C66.4,614.9 69.6,631.1 72.8,636.3C76.0,641.5 79.1,644.8 82.2,640.3C85.3,635.8 88.7,615.6 91.6,609.3C94.5,603.0 96.3,602.6 99.7,602.6C103.1,602.6 107.9,609.7 111.9,609.3C116.0,608.9 119.7,606.0 124.0,600.0C128.3,594.0 133.5,578.2 137.5,573.0C141.5,567.8 144.2,569.0 148.2,569.0C152.2,569.0 157.2,570.3 161.7,573.0C166.2,575.7 170.3,576.0 175.0,585.0C179.7,594.0 185.9,622.4 190.0,626.9C194.1,631.4 194.8,605.3 199.5,612.0C204.2,618.7 212.9,661.5 218.3,667.3C223.7,673.1 228.0,651.3 231.8,647.0C235.6,642.7 237.6,639.0 241.0,641.7C244.4,644.4 247.9,663.4 252.0,663.2C256.1,663.0 260.3,636.9 265.5,640.3C270.7,643.7 278.9,677.9 283.0,683.5C287.1,689.1 286.2,685.0 290.0,674.0C293.8,663.0 301.5,627.3 306.0,617.4C310.5,607.5 313.8,616.5 317.0,614.7C320.2,612.9 320.5,601.7 325.0,606.6C329.5,611.5 339.1,638.3 344.0,644.4C348.9,650.5 350.7,643.2 354.7,643.0C358.7,642.8 363.3,650.4 368.2,643.0C373.1,635.6 380.3,604.2 384.3,598.6C388.3,593.0 389.2,598.8 392.4,609.3C395.5,619.8 398.7,656.9 403.2,661.9C407.7,666.9 415.1,641.2 419.4,639.0C423.7,636.8 425.2,649.3 428.8,648.4C432.4,647.5 436.7,642.4 441.0,633.6C445.3,624.9 450.8,601.3 454.4,595.9C458.0,590.5 459.8,601.1 462.5,601.3C465.2,601.5 466.6,594.3 470.6,597.2C474.7,600.1 481.4,622.8 486.8,618.8C492.2,614.8 498.5,580.0 503.0,573.0C507.5,566.0 508.8,573.6 513.7,577.0C518.6,580.4 526.8,589.2 532.6,593.2C538.5,597.2 543.4,604.9 548.8,601.3C554.2,597.7 560.4,573.9 564.9,571.6C569.4,569.4 571.4,582.0 575.7,587.8C580.0,593.6 586.0,599.4 590.8,606.6C595.6,613.8 600.7,630.2 604.3,630.9C607.9,631.6 609.2,615.2 612.3,610.7C615.4,606.2 620.4,604.2 623.1,604.0C625.8,603.8 625.6,613.3 628.5,609.3C631.4,605.2 635.6,577.7 640.6,579.7C645.6,581.7 653.5,614.5 658.2,621.5C662.9,628.5 663.2,613.6 669.0,621.5C674.8,629.4 686.9,665.2 693.2,668.6C699.5,672.0 702.2,650.7 706.7,641.7C711.2,632.7 714.4,624.8 720.2,614.7C726.0,604.6 735.9,586.6 741.7,581.0C747.5,575.4 750.2,582.6 755.2,581.0C760.2,579.4 766.0,572.3 771.4,571.6C776.8,570.9 782.1,568.5 787.5,577.0C792.9,585.5 799.7,617.0 803.7,622.8C807.8,628.6 808.2,615.1 811.8,612.0C815.4,608.9 820.8,602.6 825.3,604.0C829.8,605.4 833.4,612.7 838.8,620.1C844.2,627.5 852.2,647.5 857.6,648.4C863.0,649.3 867.6,630.0 871.0,625.5C874.4,621.0 873.9,620.1 878.0,621.5C882.1,622.9 890.2,632.7 895.6,633.6C901.0,634.5 905.2,622.2 910.4,626.9C915.6,631.6 920.8,665.0 926.6,661.9C932.5,658.8 941.0,615.4 945.5,608.0C950.0,600.6 950.9,610.9 953.6,617.4C956.3,623.9 957.1,639.6 961.6,647.0C966.1,654.4 976.0,661.2 980.5,661.9C985.0,662.6 985.0,658.5 988.6,651.1C992.2,643.7 998.4,622.8 1002.0,617.4C1005.6,612.0 1006.8,614.8 1010.0,618.8C1013.2,622.8 1017.8,636.8 1021.0,641.7C1024.2,646.6 1025.0,652.9 1029.0,648.4C1033.0,643.9 1040.2,623.5 1045.2,614.7C1050.2,606.0 1054.2,596.6 1058.7,595.9C1063.2,595.2 1066.6,610.7 1072.0,610.7C1077.4,610.7 1085.6,593.6 1091.0,595.9C1096.4,598.1 1099.5,614.8 1104.5,624.2C1109.5,633.6 1115.3,650.9 1120.7,652.5C1126.1,654.1 1134.1,636.8 1136.8,633.6" fill="none" stroke="#f7c531" stroke-width="1.2"/>
</g>
<text x="9" y="17.6" fill="#d6d6d6" stroke="#d6d6d6" stroke-width="0.35" font-size="11.7" textLength="353" lengthAdjust="spacingAndGlyphs">joodabas1995 published on TradingView.com, Apr 10, 2025 09:33 UTC-4</text>
<text x="16.8" y="42" font-size="10.8" fill="#c6c6c6" stroke="#c6c6c6" stroke-width="0.3" textLength="130.4" lengthAdjust="spacingAndGlyphs">U.S. Dollar / Japanese Yen</text>
<circle cx="153.2" cy="38.5" r="0.9" fill="#c6c6c6"/>
<text x="158.8" y="42" font-size="10.8" fill="#c6c6c6" stroke="#c6c6c6" stroke-width="0.3" textLength="11.2" lengthAdjust="spacingAndGlyphs">4h</text>
<circle cx="176" cy="38.5" r="0.9" fill="#c6c6c6"/>
<text x="181.2" y="42" font-size="10.8" fill="#c6c6c6" stroke="#c6c6c6" stroke-width="0.3" textLength="61.6" lengthAdjust="spacingAndGlyphs">CAPITALCOM</text>
<text x="249.2" y="42" font-size="10.8" fill="#c6c6c6" stroke="#c6c6c6" stroke-width="0.3">O</text>
<text x="258" y="42" font-size="10.8" fill="#f23645" stroke="#f23645" stroke-width="0.3" textLength="37.3" lengthAdjust="spacingAndGlyphs">145.446</text>
<text x="302" y="42" font-size="10.8" fill="#c6c6c6" stroke="#c6c6c6" stroke-width="0.3">H</text>
<text x="310" y="42" font-size="10.8" fill="#f23645" stroke="#f23645" stroke-width="0.3" textLength="37.3" lengthAdjust="spacingAndGlyphs">145.537</text>
<text x="354.8" y="42" font-size="10.8" fill="#c6c6c6" stroke="#c6c6c6" stroke-width="0.3">L</text>
<text x="360.7" y="42" font-size="10.8" fill="#f23645" stroke="#f23645" stroke-width="0.3" textLength="37.8" lengthAdjust="spacingAndGlyphs">145.068</text>
<text x="405.2" y="42" font-size="10.8" fill="#c6c6c6" stroke="#c6c6c6" stroke-width="0.3">C</text>
<text x="413.5" y="42" font-size="10.8" fill="#f23645" stroke="#f23645" stroke-width="0.3" textLength="37.3" lengthAdjust="spacingAndGlyphs">145.085</text>
<text x="458.8" y="42" font-size="10.8" fill="#f23645" stroke="#f23645" stroke-width="0.3" textLength="76.5" lengthAdjust="spacingAndGlyphs">−0.364 (−0.25%)</text>
<text x="542" y="42" font-size="10.8" fill="#f23645" stroke="#f23645" stroke-width="0.3" textLength="77.9" lengthAdjust="spacingAndGlyphs">−2.662 (−1.80%)</text>
<rect x="1433.5" y="28.5" width="54" height="24" rx="4" fill="#0f0f0f" stroke="#3a3a3a"/>
<text x="1441" y="44.5" font-size="10.5" font-weight="700" fill="#d1d4dc">JPY</text>
<text x="1439" y="74.9" font-size="10.8" fill="#c2c2c2" stroke="#c2c2c2" stroke-width="0.25">156.000</text>
<text x="1439" y="107.0" font-size="10.8" fill="#c2c2c2" stroke="#c2c2c2" stroke-width="0.25">155.000</text>
<text x="1439" y="139.6" font-size="10.8" fill="#c2c2c2" stroke="#c2c2c2" stroke-width="0.25">154.000</text>
<text x="1439" y="173.6" font-size="10.8" fill="#c2c2c2" stroke="#c2c2c2" stroke-width="0.25">153.000</text>
<text x="1439" y="207.0" font-size="10.8" fill="#c2c2c2" stroke="#c2c2c2" stroke-width="0.25">152.000</text>
<text x="1439" y="240.6" font-size="10.8" fill="#c2c2c2" stroke="#c2c2c2" stroke-width="0.25">151.000</text>
<text x="1439" y="274.6" font-size="10.8" fill="#c2c2c2" stroke="#c2c2c2" stroke-width="0.25">150.000</text>
<text x="1439" y="307.6" font-size="10.8" fill="#c2c2c2" stroke="#c2c2c2" stroke-width="0.25">149.000</text>
<text x="1439" y="342.3" font-size="10.8" fill="#c2c2c2" stroke="#c2c2c2" stroke-width="0.25">148.000</text>
<text x="1439" y="377.2" font-size="10.8" fill="#c2c2c2" stroke="#c2c2c2" stroke-width="0.25">147.000</text>
<text x="1439" y="496.9" font-size="10.8" fill="#c2c2c2" stroke="#c2c2c2" stroke-width="0.25">143.600</text>
<rect x="1431" y="324" width="52" height="15.5" fill="#8fa7f7" rx="1"/>
<text x="1439" y="335.8" font-size="10.5" fill="#131722" stroke="#131722" stroke-width="0.3">148.206</text>
<rect x="1431" y="401" width="51.5" height="15.7" fill="#2962ff" rx="1"/>
<text x="1439" y="412.9" font-size="10.5" fill="#ffffff" stroke="#ffffff" stroke-width="0.3">146.000</text>
<text x="1439" y="440" font-size="10.8" fill="#c2c2c2">145.300</text>
<rect x="1431" y="433.3" width="55" height="28" fill="#f23645" rx="1"/>
<text x="1439" y="444.6" font-size="10.5" fill="#ffffff" stroke="#ffffff" stroke-width="0.3">145.085</text>
<text x="1438.5" y="457.6" font-size="10.5" fill="#fbd0d4" stroke="#fbd0d4" stroke-width="0.15" textLength="42.5" lengthAdjust="spacingAndGlyphs">03:26:26</text>
<rect x="1431" y="461.2" width="51.5" height="15.8" fill="#2962ff" rx="1"/>
<text x="1439" y="473.1" font-size="10.5" fill="#ffffff" stroke="#ffffff" stroke-width="0.3">145.000</text>
<text x="1438.5" y="545" font-size="10.8" fill="#b2b5be">80.00</text>
<text x="1438.5" y="701" font-size="10.8" fill="#b2b5be">20.00</text>
<text x="1438.5" y="597" font-size="10.8" fill="#c2c2c2">60.00</text>
<rect x="1431.3" y="591.3" width="39.2" height="15.1" fill="#4caf50" rx="1"/>
<text x="1439.3" y="602.8" font-size="10.5" fill="#ffffff" stroke="#ffffff" stroke-width="0.3">58.30</text>
<rect x="1431.3" y="618.2" width="39.2" height="14.6" fill="#f7c531" rx="1"/>
<text x="1439.3" y="629.5" font-size="10.5" fill="#131722" stroke="#131722" stroke-width="0.3">44.47</text>
<rect x="1431.3" y="634.1" width="39.2" height="15.4" fill="#7e57c2" rx="1"/>
<text x="1439.3" y="645.8" font-size="10.5" fill="#ffffff" stroke="#ffffff" stroke-width="0.3">41.69</text>
<rect x="1431.3" y="662.3" width="39.2" height="15.4" fill="#4caf50" rx="1"/>
<text x="1439.3" y="674.0" font-size="10.5" fill="#ffffff" stroke="#ffffff" stroke-width="0.3">30.65</text>
<text x="62" y="738" font-size="11" fill="#c4c4c4" stroke="#c4c4c4" stroke-width="0.3" text-anchor="middle">Jun</text>
<text x="160.5" y="738" font-size="11" fill="#c4c4c4" stroke="#c4c4c4" stroke-width="0.3" text-anchor="middle">Jul</text>
<text x="272" y="738" font-size="11" fill="#c4c4c4" stroke="#c4c4c4" stroke-width="0.3" text-anchor="middle">Aug</text>
<text x="377.5" y="738" font-size="11" fill="#c4c4c4" stroke="#c4c4c4" stroke-width="0.3" text-anchor="middle">Sep</text>
<text x="481.5" y="738" font-size="11" fill="#c4c4c4" stroke="#c4c4c4" stroke-width="0.3" text-anchor="middle">Oct</text>
<text x="592.5" y="738" font-size="11" fill="#c4c4c4" stroke="#c4c4c4" stroke-width="0.3" text-anchor="middle">Nov</text>
<text x="692.5" y="738" font-size="11" fill="#c4c4c4" stroke="#c4c4c4" stroke-width="0.3" text-anchor="middle">Dec</text>
<text x="794.5" y="738" font-size="11" fill="#c4c4c4" stroke="#c4c4c4" stroke-width="0.3" text-anchor="middle">2025</text>
<text x="901.5" y="738" font-size="11" fill="#c4c4c4" stroke="#c4c4c4" stroke-width="0.3" text-anchor="middle">Feb</text>
<text x="998.5" y="738" font-size="11" fill="#c4c4c4" stroke="#c4c4c4" stroke-width="0.3" text-anchor="middle">Mar</text>
<text x="1102.5" y="738" font-size="11" fill="#c4c4c4" stroke="#c4c4c4" stroke-width="0.3" text-anchor="middle">Apr</text>
<text x="1208.5" y="738" font-size="11" fill="#c4c4c4" stroke="#c4c4c4" stroke-width="0.3" text-anchor="middle">May</text>
<text x="1314" y="738" font-size="11" fill="#c4c4c4" stroke="#c4c4c4" stroke-width="0.3" text-anchor="middle">Jun</text>
<text x="1418" y="738" font-size="11" fill="#c4c4c4" stroke="#c4c4c4" stroke-width="0.3" text-anchor="middle">Jul</text>
<clipPath id="fc1"><circle cx="1141.2" cy="507.4" r="7.2"/></clipPath><clipPath id="fc2"><circle cx="1157" cy="507.4" r="7.2"/></clipPath>
<circle cx="1137.6" cy="507.4" r="8.5" fill="none" stroke="#a23ec0" stroke-width="1.4"/>
<circle cx="1141.2" cy="507.4" r="9.4" fill="#ef2f45"/>
<circle cx="1141.2" cy="507.4" r="7.7" fill="#0f0f0f"/>
<g clip-path="url(#fc1)"><rect x="1133.2" y="500.20" width="16" height="2.1" fill="#f05a4a"/><rect x="1133.2" y="502.26" width="16" height="2.1" fill="#ffffff"/><rect x="1133.2" y="504.32" width="16" height="2.1" fill="#f05a4a"/><rect x="1133.2" y="506.38" width="16" height="2.1" fill="#ffffff"/><rect x="1133.2" y="508.44" width="16" height="2.1" fill="#f05a4a"/><rect x="1133.2" y="510.50" width="16" height="2.1" fill="#ffffff"/><rect x="1133.2" y="512.56" width="16" height="2.1" fill="#f05a4a"/><rect x="1133.2" y="499" width="8" height="8.2" fill="#3a86f0"/><rect x="1136.4" y="501.5" width="0.9" height="0.9" fill="#cfe3ff"/><rect x="1136.4" y="503.7" width="0.9" height="0.9" fill="#cfe3ff"/><rect x="1136.4" y="505.9" width="0.9" height="0.9" fill="#cfe3ff"/><rect x="1138.6" y="501.5" width="0.9" height="0.9" fill="#cfe3ff"/><rect x="1138.6" y="503.7" width="0.9" height="0.9" fill="#cfe3ff"/><rect x="1138.6" y="505.9" width="0.9" height="0.9" fill="#cfe3ff"/></g>
<circle cx="1157.0" cy="507.4" r="9.4" fill="#ef2f45"/>
<circle cx="1157.0" cy="507.4" r="7.7" fill="#0f0f0f"/>
<g clip-path="url(#fc2)"><rect x="1149.0" y="500.20" width="16" height="2.1" fill="#f05a4a"/><rect x="1149.0" y="502.26" width="16" height="2.1" fill="#ffffff"/><rect x="1149.0" y="504.32" width="16" height="2.1" fill="#f05a4a"/><rect x="1149.0" y="506.38" width="16" height="2.1" fill="#ffffff"/><rect x="1149.0" y="508.44" width="16" height="2.1" fill="#f05a4a"/><rect x="1149.0" y="510.50" width="16" height="2.1" fill="#ffffff"/><rect x="1149.0" y="512.56" width="16" height="2.1" fill="#f05a4a"/><rect x="1149.0" y="499" width="8" height="8.2" fill="#3a86f0"/><rect x="1152.2" y="501.5" width="0.9" height="0.9" fill="#cfe3ff"/><rect x="1152.2" y="503.7" width="0.9" height="0.9" fill="#cfe3ff"/><rect x="1152.2" y="505.9" width="0.9" height="0.9" fill="#cfe3ff"/><rect x="1154.4" y="501.5" width="0.9" height="0.9" fill="#cfe3ff"/><rect x="1154.4" y="503.7" width="0.9" height="0.9" fill="#cfe3ff"/><rect x="1154.4" y="505.9" width="0.9" height="0.9" fill="#cfe3ff"/></g>
<g fill="#dcdcdc"><path d="M8.8 758H16.5V767H12.8V761.2H8.8Z"/><circle cx="19.5" cy="759.7" r="1.6"/><path d="M22 758H27.1L24.2 767H19.3Z"/></g>
<text x="30" y="767" font-size="11.3" fill="#d6d6d6" stroke="#d6d6d6" stroke-width="0.4" textLength="65" lengthAdjust="spacingAndGlyphs">TradingView</text>
</svg></body></html>
